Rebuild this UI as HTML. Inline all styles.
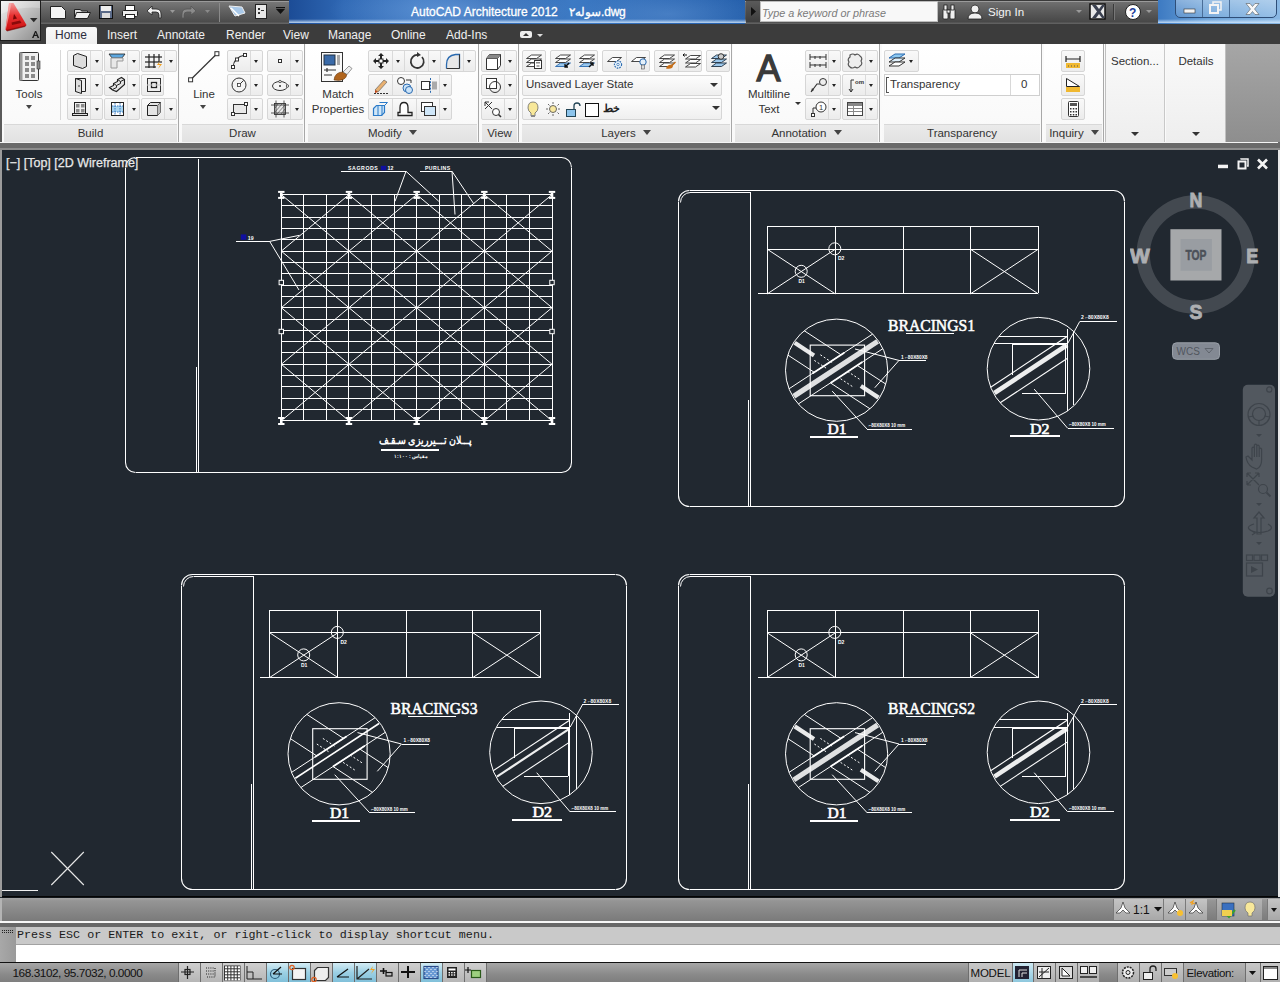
<!DOCTYPE html>
<html><head><meta charset="utf-8">
<style>
*{margin:0;padding:0;box-sizing:border-box}
html,body{width:1280px;height:982px;overflow:hidden;background:#212830;font-family:"Liberation Sans",sans-serif}
.a{position:absolute}
.tb{position:absolute;top:0;height:23.5px}
.qat{left:40px;width:249px;background:linear-gradient(#7c7c7c,#626262 45%,#4c4c4c 90%,#6a6a6a)}
.ttl{left:289px;width:457px;background:linear-gradient(90deg,#1c4c96,#2f68b4 12%,#3a74be 28%,#2e66b0 45%,#3d7ac4 62%,#2d68b4 82%,#2560ac);}
.srch{left:745px;width:413px;background:linear-gradient(#747474,#5c5c5c 45%,#484848 90%,#666)}
.win{left:1158px;width:122px;background:linear-gradient(90deg,#3d7ac2,#6ba2d8 40%,#8ab8e4)}
.tabs{position:absolute;left:0;top:23.5px;width:1280px;height:20.5px;background:#3c3c3c}
.tab{position:absolute;top:27.6px;font-size:12px;color:#f0f0f0;line-height:14px}
.rib{position:absolute;left:0;top:44px;width:1280px;height:98px;background:#fcfcfc}
.pnl{position:absolute;top:44px;height:98px;background:linear-gradient(#ffffff,#f8f8f8);border-right:1px solid #a8a8a8}
.pt{position:absolute;left:2px;right:2px;top:80px;height:18px;background:linear-gradient(#eaeaea,#e2e2e2);border-top:1px solid #d8d8d8;font-size:12.5px;color:#404040;text-align:center;line-height:17px}
.btn{position:absolute;height:22px;background:linear-gradient(#f9f9f9,#ececec);border:1px solid #d6d6d6;border-radius:2px}
.dd{position:absolute;width:0;height:0;border-left:4px solid transparent;border-right:4px solid transparent;border-top:4px solid #333}
.lbl{position:absolute;font-size:13px;color:#333;text-align:center;line-height:15px}
</style></head><body>

<!-- title bar -->
<div class="tb qat"></div>
<div class="tb ttl"></div>
<div class="tb srch"></div>
<div class="tb win"></div>
<div class="a" style="left:289px;top:0;width:457px;height:23px;background:radial-gradient(ellipse 120px 30px at 160px 10px,rgba(120,170,230,.55),transparent),radial-gradient(ellipse 90px 25px at 380px 14px,rgba(110,160,220,.4),transparent)"></div>
<div class="a" style="left:289px;top:19px;width:457px;height:4px;background:linear-gradient(rgba(200,225,255,0),rgba(215,235,255,.85))"></div><div class="a" style="left:1158px;top:19px;width:122px;height:4px;background:linear-gradient(rgba(200,225,255,0),rgba(215,235,255,.85))"></div><div class="a" style="left:40px;top:1px;width:249px;height:1px;background:#9a9a9a"></div><div class="a" style="left:745px;top:1px;width:413px;height:1px;background:#9a9a9a"></div><div class="a" style="left:40px;top:0;width:249px;height:1px;background:#3a3a3a"></div><div class="a" style="left:745px;top:0;width:413px;height:1px;background:#3a3a3a"></div>
<div class="a" style="left:411px;top:5px;font-size:12px;color:#fff;white-space:nowrap;line-height:14px;-webkit-text-stroke:0.3px #fff">AutoCAD Architecture 2012</div>
<div class="a" style="left:569px;top:5px;font-size:12px;color:#fff;white-space:nowrap;line-height:14px;-webkit-text-stroke:0.3px #fff;letter-spacing:-0.3px">سوله۲.dwg</div>
<!-- QAT icons -->
<svg class="a" style="left:44px;top:0" width="244" height="23" viewBox="44 0 244 23">
<path d="M50.5 6.5 h11 l4 4 v8 h-15z" fill="#f4f4f4" stroke="#222"/>
<path d="M74.5 9.5 h6 l1 1.5 h6 v7 h-13z" fill="#ddd" stroke="#222"/><path d="M76.5 12.5 h14 l-3 6 h-13z" fill="#f0f0f0" stroke="#222"/>
<rect x="99.5" y="5.5" width="13" height="13" fill="#5a6a88" stroke="#111"/><rect x="101" y="6" width="10" height="5" fill="#eee"/><rect x="102" y="13" width="8" height="5" fill="#ddd"/>
<rect x="122.5" y="10.5" width="15" height="6" rx="1" fill="#eee" stroke="#222"/><rect x="125.5" y="5.5" width="9" height="5" fill="#fff" stroke="#222"/><rect x="125.5" y="14.5" width="9" height="4" fill="#fff" stroke="#222"/>
<path d="M147 11 l5 -5 v3 h4 q5 0 5 5 v4 h-2 v-3 q0 -3 -3 -3 h-4 v3z" fill="#f2f2f2" stroke="#222" stroke-width=".8"/>
<path d="M170 10 h5 l-2.5 3z" fill="#9a9a9a"/>
<path d="M196 11 l-5 -5 v3 h-4 q-5 0 -5 5 v4 h2 v-3 q0 -3 3 -3 h4 v3z" fill="#8a8a8a" stroke="#555" stroke-width=".8"/>
<path d="M205 10 h5 l-2.5 3z" fill="#8a8a8a"/>
<line x1="219.5" y1="3" x2="219.5" y2="22" stroke="#8a8a8a"/>
<path d="M229 6 l6 10 l10 -3 l-3 -6z" fill="#a8c8e8" stroke="#eee" stroke-width="1"/><path d="M231 8 l8 8" stroke="#fff" stroke-width="1.5"/>
<rect x="255.5" y="4.5" width="11" height="14" fill="#e8e8e8" stroke="#222"/><rect x="258" y="8" width="2" height="2" fill="#333"/><rect x="258" y="12" width="2" height="2" fill="#333"/><rect x="261" y="10" width="3" height="1" fill="#333"/>
<path d="M276 9 h9 l-4.5 5z" fill="#111"/><rect x="276" y="7" width="9" height="1.2" fill="#111"/>
</svg>
<!-- search -->
<div class="a" style="left:746px;top:1px;width:14px;height:21px;background:linear-gradient(#5a5a5a,#3e3e3e)"></div>
<svg class="a" style="left:746px;top:1px" width="14" height="21"><path d="M5 6 l5 4.5 l-5 4.5z" fill="#111"/></svg>
<div class="a" style="left:760px;top:1px;width:178px;height:21px;background:#f8f8f8;border:1px solid #bdbdbd"></div>
<div class="a" style="left:762px;top:5.5px;font-size:10.8px;font-style:italic;color:#7a7a7a;line-height:14px;white-space:nowrap">Type a keyword or phrase</div>
<svg class="a" style="left:940px;top:2px" width="150" height="20">
<g fill="#f0f0f0" stroke="#222" stroke-width=".8"><rect x="3" y="7" width="5" height="10" rx="1"/><rect x="10" y="7" width="5" height="10" rx="1"/><rect x="4" y="3" width="3" height="5"/><rect x="11" y="3" width="3" height="5"/><rect x="7" y="8" width="3" height="3"/></g>
<circle cx="35" cy="7" r="4" fill="#f0f0f0" stroke="#222" stroke-width=".8"/><path d="M28 17 q0 -6 7 -6 q7 0 7 6z" fill="#f0f0f0" stroke="#222" stroke-width=".8"/>
<path d="M136 8 h6 l-3 3z" fill="#9a9a9a"/>
</svg>
<div class="a" style="left:988px;top:5px;font-size:11.6px;color:#f4f4f4;line-height:14px">Sign In</div>
<svg class="a" style="left:1088px;top:2px" width="70" height="20">
<rect x="2" y="2" width="15" height="15" fill="#e8e8e8" stroke="#111" stroke-width="1.5"/><path d="M4 3 l5 6.5 l-5 6.5 h4 l3 -4 l3 4 h3 l-4.5 -6.5 l4.5 -6.5 h-3 l-3 4 l-3 -4z" fill="#3a4050"/>
<line x1="25.5" y1="2" x2="25.5" y2="18" stroke="#3a3a3a"/><line x1="26.5" y1="2" x2="26.5" y2="18" stroke="#777"/>
<circle cx="45" cy="10" r="7.5" fill="#fff" stroke="#222"/><text x="41" y="14.5" font-family="Liberation Sans" font-weight="bold" font-size="12" fill="#1a3c9a">?</text>
<path d="M58 8 h6 l-3 3z" fill="#9a9a9a"/>
</svg>
<!-- window buttons -->
<div class="a" style="left:1175px;top:-2px;width:102px;height:20px;border:1px solid #2e4e78;border-radius:0 0 5px 5px;background:linear-gradient(rgba(255,255,255,.35),rgba(255,255,255,.1))"></div>
<div class="a" style="left:1202px;top:0;width:1px;height:17px;background:#4a6e98"></div>
<div class="a" style="left:1229px;top:0;width:1px;height:17px;background:#4a6e98"></div>
<svg class="a" style="left:1175px;top:0" width="102" height="18">
<rect x="9" y="9" width="11" height="4" fill="#f4f4f4" stroke="#333" stroke-width=".6"/>
<rect x="35" y="5" width="8" height="8" fill="none" stroke="#f4f4f4" stroke-width="2"/><path d="M38 4 v-2 h8 v8 h-2" fill="none" stroke="#f4f4f4" stroke-width="1.5"/>
<path d="M46 3 h4 l2.5 3 l2.5 -3 h4 l-4.5 5.5 l4.5 5.5 h-4 l-2.5 -3 l-2.5 3 h-4 l4.5 -5.5z" fill="#f8f8f8" stroke="#444" stroke-width=".5" transform="translate(25,0.5)"/>
</svg>
<!-- tabs -->
<div class="tabs"></div>
<div class="a" style="left:46px;top:27px;width:51px;height:17px;background:linear-gradient(#f8f8f8,#f0f0f0);border-radius:2px 2px 0 0"></div>
<div class="tab" style="left:55px;color:#2c2c3c">Home</div>
<div class="tab" style="left:107px">Insert</div>
<div class="tab" style="left:157px">Annotate</div>
<div class="tab" style="left:226px">Render</div>
<div class="tab" style="left:283px">View</div>
<div class="tab" style="left:328px">Manage</div>
<div class="tab" style="left:391px">Online</div>
<div class="tab" style="left:446px">Add-Ins</div>
<svg class="a" style="left:519px;top:29px" width="26" height="12"><rect x="1" y="2" width="12" height="7" rx="2" fill="#eee"/><path d="M4 7 l3-3 l3 3z" fill="#333"/><path d="M18 5 h6 l-3 3z" fill="#ddd"/></svg>
<!-- app button -->
<div class="a" style="left:0;top:0;width:41px;height:41px;background:#1e1e1e"></div>
<svg class="a" style="left:0;top:0" width="41" height="41" viewBox="0 0 41 41">
<defs><linearGradient id="abg" x1="0" y1="0" x2="1" y2="1"><stop offset="0" stop-color="#f2f2f2"/><stop offset=".45" stop-color="#c4c4c4"/><stop offset="1" stop-color="#8c8c8c"/></linearGradient>
<linearGradient id="ared" x1="0" y1="0" x2="0" y2="1"><stop offset="0" stop-color="#f29a9a"/><stop offset=".45" stop-color="#e83030"/><stop offset="1" stop-color="#c81010"/></linearGradient></defs>
<rect x="1" y="1" width="39" height="39" fill="url(#abg)"/>
<path d="M1 14 Q20 6 40 8 V1 H1z" fill="#fff" opacity=".25"/>
<path d="M9 3 L13.5 3 L26.5 25 L25 26.5 L7 31 L5.5 29.5 Z" fill="url(#ared)"/>
<path d="M9 3 L11.5 3 L8.5 18 L6 29 L5.5 29.5Z" fill="#f7b0b0" opacity=".7"/>
<path d="M14 14 L17 18.5 L13 19.5 Z" fill="#7a0808"/>
<path d="M11.5 22.5 L20 20.5 L21.5 23 L12 25 Z" fill="#8a0a0a"/>
<path d="M6 30 L25 25.5 L26.5 25 L25 27 L7 31.5Z" fill="#6a0606" opacity=".6"/>
<path d="M30 18 h7.5 l-3.75 4.2z" fill="#2a2a2a"/>
<path d="M32 38 l3 -7 h1.2 l3 7 h-1.6 l-.8 -2 h-2.5 l-.8 2z M34.8 34.8 h1.8 l-.9 -2.3z" fill="#1a1a1a"/>
</svg>

<div class="a" style="left:0;top:44px;width:1280px;height:106px;background:#6a6a6a"></div>
<div class="a" style="left:0;top:44px;width:1226px;height:98px;background:#fafafa"></div>
<div class="a" style="left:0;top:44px;width:2px;height:98px;background:#5a5a5a"></div>
<div class="a" style="left:0;top:142px;width:1278px;height:1px;background:#f4f4f4"></div>
<div class="a" style="left:0;top:148px;width:1280px;height:2px;background:#8c8c8c"></div>
<div class="a" style="left:1226px;top:44px;width:54px;height:98px;background:linear-gradient(#a6a6a6,#8e8e8e)"></div>
<div class="pnl" style="left:2px;width:177px"></div>
<div class="pt" style="left:4px;width:173px;top:124px;height:18px;position:absolute"></div>
<div class="a" style="left:30.5px;width:120px;top:126.8px;font-size:11.5px;color:#333;line-height:13.5px;text-align:center;white-space:nowrap">Build</div>
<div class="a" style="left:60px;top:50px;width:1px;height:70px;background:#d8d8d8"></div>
<svg class="a" style="left:17px;top:51px" width="26" height="32" viewBox="0 0 26 32"><rect x="2.5" y="1.5" width="19" height="28" rx="1" fill="#f0f0f0" stroke="#333"/><rect x="2.5" y="1.5" width="3" height="28" fill="#9a9a9a"/><rect x="8" y="5" width="4" height="4" fill="#8a8a8a"/><rect x="8" y="11" width="4" height="4" fill="#8a8a8a"/><rect x="8" y="17" width="4" height="4" fill="#8a8a8a"/><rect x="8" y="23" width="4" height="4" fill="#8a8a8a"/><rect x="14" y="5" width="4" height="4" fill="#8a8a8a"/><rect x="14" y="11" width="4" height="4" fill="#8a8a8a"/><rect x="14" y="17" width="4" height="4" fill="#8a8a8a"/><rect x="14" y="23" width="4" height="4" fill="#8a8a8a"/><rect x="20" y="10" width="3" height="8" fill="#888" stroke="#333" stroke-width=".6"/></svg>
<div class="a" style="left:-31px;width:120px;top:87.7px;font-size:11.5px;color:#333;line-height:13.5px;text-align:center;white-space:nowrap">Tools</div>
<div class="dd" style="left:25.5px;top:105.0px;border-left-width:3.5px;border-right-width:3.5px;border-top:4px solid #444"></div>
<div class="btn" style="left:67px;top:50px;width:36px;height:22px"></div>
<div class="a" style="left:90px;top:51px;width:1px;height:20px;background:#dadada"></div>
<div class="dd" style="left:94.5px;top:59.5px;border-left-width:2.7px;border-right-width:2.7px;border-top:3.2px solid #222"></div>
<div class="btn" style="left:104px;top:50px;width:36px;height:22px"></div>
<div class="a" style="left:127px;top:51px;width:1px;height:20px;background:#dadada"></div>
<div class="dd" style="left:131.5px;top:59.5px;border-left-width:2.7px;border-right-width:2.7px;border-top:3.2px solid #222"></div>
<div class="btn" style="left:67px;top:74px;width:36px;height:22px"></div>
<div class="a" style="left:90px;top:75px;width:1px;height:20px;background:#dadada"></div>
<div class="dd" style="left:94.5px;top:83.5px;border-left-width:2.7px;border-right-width:2.7px;border-top:3.2px solid #222"></div>
<div class="btn" style="left:104px;top:74px;width:36px;height:22px"></div>
<div class="a" style="left:127px;top:75px;width:1px;height:20px;background:#dadada"></div>
<div class="dd" style="left:131.5px;top:83.5px;border-left-width:2.7px;border-right-width:2.7px;border-top:3.2px solid #222"></div>
<div class="btn" style="left:67px;top:98px;width:36px;height:22px"></div>
<div class="a" style="left:90px;top:99px;width:1px;height:20px;background:#dadada"></div>
<div class="dd" style="left:94.5px;top:107.5px;border-left-width:2.7px;border-right-width:2.7px;border-top:3.2px solid #222"></div>
<div class="btn" style="left:104px;top:98px;width:36px;height:22px"></div>
<div class="a" style="left:127px;top:99px;width:1px;height:20px;background:#dadada"></div>
<div class="dd" style="left:131.5px;top:107.5px;border-left-width:2.7px;border-right-width:2.7px;border-top:3.2px solid #222"></div>
<div class="btn" style="left:141px;top:50px;width:36px;height:22px"></div>
<div class="a" style="left:164px;top:51px;width:1px;height:20px;background:#dadada"></div>
<div class="dd" style="left:168.5px;top:59.5px;border-left-width:2.7px;border-right-width:2.7px;border-top:3.2px solid #222"></div>
<div class="btn" style="left:141px;top:74px;width:23px;height:22px"></div>
<div class="btn" style="left:141px;top:98px;width:36px;height:22px"></div>
<div class="a" style="left:164px;top:99px;width:1px;height:20px;background:#dadada"></div>
<div class="dd" style="left:168.5px;top:107.5px;border-left-width:2.7px;border-right-width:2.7px;border-top:3.2px solid #222"></div>
<svg class="a" style="left:70px;top:52px" width="20" height="18" viewBox="0 0 20 18"><path d="M3.5 3.5 l4 -2 l9 3 v10 l-4 2 l-9 -3z" fill="#dcdcdc" stroke="#222"/><path d="M7.5 1.5 v0" stroke="#222"/></svg>
<svg class="a" style="left:107px;top:52px" width="20" height="18" viewBox="0 0 20 18"><path d="M2 2 h16 l-3 4 h-10z" fill="#5ea8e0" stroke="#222" stroke-width=".8"/><path d="M4 6 h12 v3 h-6 v7 h-6z" fill="#e8e8e8" stroke="#999"/></svg>
<svg class="a" style="left:144px;top:52px" width="20" height="18" viewBox="0 0 20 18"><g stroke="#222" stroke-width="1.2"><line x1="5" y1="2" x2="5" y2="16"/><line x1="10" y1="2" x2="10" y2="16"/><line x1="15" y1="2" x2="15" y2="10"/><line x1="1" y1="5" x2="18" y2="5"/><line x1="1" y1="10" x2="18" y2="10"/><line x1="1" y1="15" x2="12" y2="15"/></g><path d="M16 9 l-3 4 h3 l-2 4 l4 -5 h-3z" fill="#f0a020"/></svg>
<svg class="a" style="left:70px;top:76px" width="20" height="18" viewBox="0 0 20 18"><path d="M5.5 2.5 h10 v13 h-10z" fill="#eee" stroke="#222"/><path d="M5.5 2.5 l6 2 v13 l-6 -2z" fill="#ddd" stroke="#222"/><circle cx="9" cy="10" r=".8" fill="#222"/></svg>
<svg class="a" style="left:107px;top:76px" width="20" height="18" viewBox="0 0 20 18"><path d="M2.5 11.5 l4 -2 v-2 l4 -2 v-2 l4 -2 l3 2 v5 l-8 7 l-4 -1.5 z" fill="#e4e4e4" stroke="#222" stroke-width="1.1"/><path d="M2.5 11.5 l3 2 l4 -2 v-2 l-3 -2 M9.5 9.5 l4 -2 v-2 l-3 -2 M13.5 5.5 l4 -2" fill="none" stroke="#222" stroke-width="1"/></svg>
<svg class="a" style="left:144px;top:76px" width="20" height="18" viewBox="0 0 20 18"><rect x="3.5" y="2.5" width="13" height="13" fill="#eee" stroke="#333"/><rect x="7.5" y="6.5" width="5" height="5" fill="#fff" stroke="#222" stroke-width="1.3"/><line x1="3" y1="9" x2="17" y2="9" stroke="#ccc"/></svg>
<svg class="a" style="left:70px;top:100px" width="20" height="18" viewBox="0 0 20 18"><rect x="4.5" y="2.5" width="11" height="11" fill="#eee" stroke="#222"/><rect x="6" y="4" width="3.5" height="3.5" fill="#8a8a8a"/><rect x="11" y="4" width="3.5" height="3.5" fill="#8a8a8a"/><rect x="6" y="9" width="3.5" height="3.5" fill="#8a8a8a"/><rect x="11" y="9" width="3.5" height="3.5" fill="#8a8a8a"/><rect x="2.5" y="13.5" width="15" height="2" fill="#ddd" stroke="#222"/></svg>
<svg class="a" style="left:107px;top:100px" width="20" height="18" viewBox="0 0 20 18"><rect x="4.5" y="2.5" width="12" height="13" fill="#fff" stroke="#222"/><rect x="5" y="6" width="11" height="6" fill="#a8d4f0"/><path d="M5 6 h11 M5 12 h11 M8 3 v12 M13 3 v12" stroke="#3a7ac0" stroke-dasharray="1.5 1"/></svg>
<svg class="a" style="left:144px;top:100px" width="20" height="18" viewBox="0 0 20 18"><path d="M3.5 5.5 l3 -3 h10 v10 l-3 3 h-10z" fill="#e4e4e4" stroke="#222"/><path d="M3.5 5.5 h10 v10 M13.5 5.5 l3 -3" fill="none" stroke="#222"/><path d="M13.5 5.5 l3-3 v10 l-3 3z" fill="#bbb"/></svg>
<div class="pnl" style="left:180px;width:125px"></div>
<div class="pt" style="left:182px;width:121px;top:124px;height:18px;position:absolute"></div>
<div class="a" style="left:182.5px;width:120px;top:126.8px;font-size:11.5px;color:#333;line-height:13.5px;text-align:center;white-space:nowrap">Draw</div>
<svg class="a" style="left:186px;top:51px" width="34" height="32" viewBox="0 0 34 32"><line x1="4.6" y1="28.8" x2="30.9" y2="2.7" stroke="#333" stroke-width="1.2"/><rect x="2.6" y="26.8" width="4" height="4" fill="#fff" stroke="#333"/><rect x="28.9" y="0.7" width="4" height="4" fill="#fff" stroke="#333"/></svg>
<div class="a" style="left:144px;width:120px;top:87.9px;font-size:11.5px;color:#333;line-height:13.5px;text-align:center;white-space:nowrap">Line</div>
<div class="dd" style="left:199.5px;top:105.0px;border-left-width:3.5px;border-right-width:3.5px;border-top:4px solid #444"></div>
<div class="btn" style="left:227px;top:50px;width:36px;height:22px"></div>
<div class="a" style="left:250px;top:51px;width:1px;height:20px;background:#dadada"></div>
<div class="dd" style="left:253.5px;top:59.5px;border-left-width:2.7px;border-right-width:2.7px;border-top:3.2px solid #222"></div>
<div class="btn" style="left:267px;top:50px;width:36px;height:22px"></div>
<div class="a" style="left:290px;top:51px;width:1px;height:20px;background:#dadada"></div>
<div class="dd" style="left:294.5px;top:59.5px;border-left-width:2.7px;border-right-width:2.7px;border-top:3.2px solid #222"></div>
<div class="btn" style="left:227px;top:74px;width:36px;height:22px"></div>
<div class="a" style="left:250px;top:75px;width:1px;height:20px;background:#dadada"></div>
<div class="dd" style="left:253.5px;top:83.5px;border-left-width:2.7px;border-right-width:2.7px;border-top:3.2px solid #222"></div>
<div class="btn" style="left:267px;top:74px;width:36px;height:22px"></div>
<div class="a" style="left:290px;top:75px;width:1px;height:20px;background:#dadada"></div>
<div class="dd" style="left:294.5px;top:83.5px;border-left-width:2.7px;border-right-width:2.7px;border-top:3.2px solid #222"></div>
<div class="btn" style="left:227px;top:98px;width:36px;height:22px"></div>
<div class="a" style="left:250px;top:99px;width:1px;height:20px;background:#dadada"></div>
<div class="dd" style="left:253.5px;top:107.5px;border-left-width:2.7px;border-right-width:2.7px;border-top:3.2px solid #222"></div>
<div class="btn" style="left:267px;top:98px;width:36px;height:22px"></div>
<div class="a" style="left:290px;top:99px;width:1px;height:20px;background:#dadada"></div>
<div class="dd" style="left:294.5px;top:107.5px;border-left-width:2.7px;border-right-width:2.7px;border-top:3.2px solid #222"></div>
<svg class="a" style="left:229px;top:52px" width="20" height="18" viewBox="0 0 20 18"><path d="M4 15 Q5 5 16 3" fill="none" stroke="#333" stroke-width="1.1"/><rect x="2.5" y="13.5" width="3" height="3" fill="#fff" stroke="#333"/><rect x="6.5" y="6" width="3" height="3" fill="#fff" stroke="#333"/><rect x="14.5" y="1.5" width="3" height="3" fill="#fff" stroke="#333"/></svg>
<svg class="a" style="left:229px;top:76px" width="20" height="18" viewBox="0 0 20 18"><circle cx="10" cy="9" r="7" fill="#f4f4f4" stroke="#333"/><line x1="10" y1="9" x2="14.5" y2="4.5" stroke="#333"/><rect x="8.5" y="7.5" width="3" height="3" fill="#fff" stroke="#333" stroke-width=".8"/></svg>
<svg class="a" style="left:229px;top:100px" width="20" height="18" viewBox="0 0 20 18"><rect x="4.5" y="4.5" width="13" height="9" fill="#e8e8e8" stroke="#333"/><rect x="2.5" y="12.5" width="3" height="3" fill="#fff" stroke="#333"/><rect x="15.5" y="2.5" width="3" height="3" fill="#fff" stroke="#333"/></svg>
<svg class="a" style="left:270px;top:52px" width="20" height="18" viewBox="0 0 20 18"><rect x="8.5" y="7.5" width="3" height="3" fill="#fff" stroke="#333"/></svg>
<svg class="a" style="left:270px;top:76px" width="20" height="18" viewBox="0 0 20 18"><ellipse cx="10" cy="10" rx="7.5" ry="4.5" fill="#f4f4f4" stroke="#333"/><circle cx="10" cy="5.5" r="1.2" fill="#fff" stroke="#333" stroke-width=".8"/><circle cx="17.5" cy="10" r="1.2" fill="#fff" stroke="#333" stroke-width=".8"/><path d="M9 10 h2 M10 9 v2" stroke="#333"/></svg>
<svg class="a" style="left:270px;top:100px" width="20" height="18" viewBox="0 0 20 18"><rect x="4.5" y="3.5" width="11" height="11" fill="#e8e8e8" stroke="#333" stroke-width=".9"/><path d="M5 8 l3 -4 M5 12 l7 -8 M7 14 l8 -9 M11 14 l4 -5" stroke="#777" stroke-width=".9"/><path d="M1 5 h18 M1 13 h18 M6 0.5 v17 M14 0.5 v17" stroke="#333" stroke-width=".8"/></svg>
<div class="pnl" style="left:306px;width:173px"></div>
<div class="pt" style="left:308px;width:169px;top:124px;height:18px;position:absolute"></div>
<div class="a" style="left:332.5px;width:120px;top:126.8px;font-size:11.5px;color:#333;line-height:13.5px;text-align:center;white-space:nowrap">Modify <span style="display:inline-block;width:0;height:0;border-left:4px solid transparent;border-right:4px solid transparent;border-top:5px solid #444;vertical-align:2px;margin-left:4px"></span></div>
<svg class="a" style="left:319px;top:51px" width="36" height="34" viewBox="0 0 36 34"><rect x="2.5" y="1.5" width="21" height="29" fill="#fafafa" stroke="#333"/><rect x="5" y="4" width="11" height="10" fill="#3a6aa8" stroke="#234"/><rect x="18" y="4" width="3" height="10" fill="#aaa"/><path d="M5 19 h12 M8 17 v4 M5 24 h8" stroke="#333" stroke-width="1.2"/><path d="M15 29 q1 -8 9 -8 l4 2 q-1 8 -13 6z" fill="#b0641c" stroke="#6a3a10" stroke-width=".6"/><path d="M24 21 l6 -6 l3 2.5 l-5 6z" fill="#eee" stroke="#555" stroke-width=".6"/></svg>
<div class="a" style="left:278px;width:120px;top:87.9px;font-size:11.5px;color:#333;line-height:13.5px;text-align:center;white-space:nowrap">Match</div>
<div class="a" style="left:278px;width:120px;top:102.8px;font-size:11.5px;color:#333;line-height:13.5px;text-align:center;white-space:nowrap">Properties</div>
<div class="btn" style="left:368px;top:50px;width:108px;height:22px"></div>
<div class="a" style="left:392px;top:51px;width:1px;height:20px;background:#dadada"></div>
<div class="a" style="left:404px;top:51px;width:1px;height:20px;background:#dadada"></div>
<div class="a" style="left:428px;top:51px;width:1px;height:20px;background:#dadada"></div>
<div class="a" style="left:440px;top:51px;width:1px;height:20px;background:#dadada"></div>
<div class="a" style="left:463px;top:51px;width:1px;height:20px;background:#dadada"></div>
<div class="dd" style="left:395.5px;top:59.5px;border-left-width:2.7px;border-right-width:2.7px;border-top:3.2px solid #222"></div>
<div class="dd" style="left:431.5px;top:59.5px;border-left-width:2.7px;border-right-width:2.7px;border-top:3.2px solid #222"></div>
<div class="dd" style="left:466.5px;top:59.5px;border-left-width:2.7px;border-right-width:2.7px;border-top:3.2px solid #222"></div>
<div class="btn" style="left:368px;top:74px;width:84px;height:22px"></div>
<div class="a" style="left:392px;top:75px;width:1px;height:20px;background:#dadada"></div>
<div class="a" style="left:416px;top:75px;width:1px;height:20px;background:#dadada"></div>
<div class="a" style="left:439px;top:75px;width:1px;height:20px;background:#dadada"></div>
<div class="dd" style="left:442.5px;top:83.5px;border-left-width:2.7px;border-right-width:2.7px;border-top:3.2px solid #222"></div>
<div class="btn" style="left:368px;top:98px;width:84px;height:22px"></div>
<div class="a" style="left:392px;top:99px;width:1px;height:20px;background:#dadada"></div>
<div class="a" style="left:416px;top:99px;width:1px;height:20px;background:#dadada"></div>
<div class="a" style="left:439px;top:99px;width:1px;height:20px;background:#dadada"></div>
<div class="dd" style="left:442.5px;top:107.5px;border-left-width:2.7px;border-right-width:2.7px;border-top:3.2px solid #222"></div>
<svg class="a" style="left:371px;top:52px" width="20" height="18" viewBox="0 0 20 18"><path d="M10 1 l3 3 h-2 v4 h4 v-2 l3 3 l-3 3 v-2 h-4 v4 h2 l-3 3 l-3 -3 h2 v-4 h-4 v2 l-3 -3 l3 -3 v2 h4 v-4 h-2z" fill="#222"/><rect x="8" y="7" width="4" height="4" fill="#fff" stroke="#222"/></svg>
<svg class="a" style="left:407px;top:52px" width="20" height="18" viewBox="0 0 20 18"><path d="M15 5 a6.5 6.5 0 1 1 -4 -2" fill="none" stroke="#333" stroke-width="1.8"/><path d="M10 0 l4 3 l-4 2z" fill="#333"/></svg>
<svg class="a" style="left:443px;top:52px" width="20" height="18" viewBox="0 0 20 18"><path d="M3.5 16.5 v-4 q0 -9 9 -10 h4 v14z" fill="#e8e8e8" stroke="none"/><path d="M3.5 16.5 v-4 q0 -9 9 -10 h4 v14" fill="none" stroke="#2a6ab0" stroke-width="1.3"/><path d="M16.5 2.5 v14 h-13" fill="none" stroke="#333"/></svg>
<svg class="a" style="left:371px;top:76px" width="20" height="18" viewBox="0 0 20 18"><path d="M4 14 l9 -10 l3 2 l-9 10z" fill="#e8b070" stroke="#555" stroke-width=".6"/><path d="M4 14 l3 2 l-3 1z" fill="#c04010"/><path d="M3 17.5 h14" stroke="#333" stroke-dasharray="2 1"/></svg>
<svg class="a" style="left:395px;top:76px" width="20" height="18" viewBox="0 0 20 18"><circle cx="6" cy="5" r="3.5" fill="#fff" stroke="#333"/><circle cx="12" cy="12" r="4" fill="#cce4f8" stroke="#2a6ab0"/><circle cx="14" cy="14" r="3.5" fill="#cce4f8" stroke="#2a6ab0"/><path d="M11 4 h5 v3" fill="none" stroke="#333"/></svg>
<svg class="a" style="left:419px;top:76px" width="20" height="18" viewBox="0 0 20 18"><rect x="2.5" y="5.5" width="8" height="8" fill="#fff" stroke="#333"/><rect x="13" y="5.5" width="5" height="8" fill="#aaa"/><line x1="11.5" y1="2" x2="11.5" y2="17" stroke="#2a6ab0" stroke-dasharray="2 1.2"/></svg>
<svg class="a" style="left:371px;top:100px" width="20" height="18" viewBox="0 0 20 18"><path d="M2.5 8.5 l3 -3 h8 v7 l-3 3 h-8z" fill="#cfe6f8" stroke="#2a7ac8" stroke-width="1.2"/><path d="M7 5.5 v10 M11 5.5 v10 M13.5 5.5 l3 -3 h-8" fill="none" stroke="#2a7ac8"/></svg>
<svg class="a" style="left:395px;top:100px" width="20" height="18" viewBox="0 0 20 18"><path d="M3 15.5 h14 v-3 h-4 v-5 q0 -5 -4 -5 q-4 0 -4 5 v5 h-2z" fill="#fff" stroke="#222" stroke-width="1.3"/></svg>
<svg class="a" style="left:419px;top:100px" width="20" height="18" viewBox="0 0 20 18"><rect x="2.5" y="2.5" width="11" height="9" fill="#fff" stroke="#333"/><rect x="5.5" y="6.5" width="11" height="9" fill="#cfe6f8" stroke="#333"/></svg>
<div class="pnl" style="left:480px;width:39px"></div>
<div class="pt" style="left:482px;width:35px;top:124px;height:18px;position:absolute"></div>
<div class="a" style="left:439.5px;width:120px;top:126.8px;font-size:11.5px;color:#333;line-height:13.5px;text-align:center;white-space:nowrap">View</div>
<div class="btn" style="left:481px;top:50px;width:36px;height:22px"></div>
<div class="a" style="left:504px;top:51px;width:1px;height:20px;background:#dadada"></div>
<div class="dd" style="left:507.5px;top:59.5px;border-left-width:2.7px;border-right-width:2.7px;border-top:3.2px solid #222"></div>
<div class="btn" style="left:481px;top:74px;width:36px;height:22px"></div>
<div class="a" style="left:504px;top:75px;width:1px;height:20px;background:#dadada"></div>
<div class="dd" style="left:507.5px;top:83.5px;border-left-width:2.7px;border-right-width:2.7px;border-top:3.2px solid #222"></div>
<div class="btn" style="left:481px;top:98px;width:36px;height:22px"></div>
<div class="a" style="left:504px;top:99px;width:1px;height:20px;background:#dadada"></div>
<div class="dd" style="left:507.5px;top:107.5px;border-left-width:2.7px;border-right-width:2.7px;border-top:3.2px solid #222"></div>
<svg class="a" style="left:483px;top:52px" width="20" height="18" viewBox="0 0 20 18"><path d="M3.5 6.5 l3 -4 h11 v11 l-3 4 h-11z" fill="#fff" stroke="#333"/><path d="M3.5 6.5 h11 v11 M14.5 6.5 l3 -4" fill="none" stroke="#333"/><path d="M6.5 2.5 h11 l-3 4 h-11z" fill="#888"/></svg>
<svg class="a" style="left:483px;top:76px" width="20" height="18" viewBox="0 0 20 18"><rect x="3.5" y="2.5" width="10" height="10" fill="#fff" stroke="#333"/><circle cx="12" cy="11" r="5.5" fill="none" stroke="#333"/></svg>
<svg class="a" style="left:483px;top:100px" width="20" height="18" viewBox="0 0 20 18"><path d="M2 2 l7 7 M2 2 v4 M2 2 h4 M9 2 l-7 7" stroke="#333" fill="none"/><circle cx="13" cy="12" r="3.5" fill="#fff" stroke="#333"/><line x1="15.5" y1="14.5" x2="18" y2="17" stroke="#333" stroke-width="1.6"/></svg>
<div class="pnl" style="left:520px;width:212px"></div>
<div class="pt" style="left:522px;width:208px;top:124px;height:18px;position:absolute"></div>
<div class="a" style="left:566.0px;width:120px;top:126.8px;font-size:11.5px;color:#333;line-height:13.5px;text-align:center;white-space:nowrap">Layers <span style="display:inline-block;width:0;height:0;border-left:4px solid transparent;border-right:4px solid transparent;border-top:5px solid #444;vertical-align:2px;margin-left:4px"></span></div>
<div class="btn" style="left:522px;top:50px;width:24px;height:22px"></div>
<div class="btn" style="left:550px;top:50px;width:48px;height:22px"></div>
<div class="a" style="left:574px;top:51px;width:1px;height:20px;background:#dadada"></div>
<div class="btn" style="left:602px;top:50px;width:48px;height:22px"></div>
<div class="a" style="left:626px;top:51px;width:1px;height:20px;background:#dadada"></div>
<div class="btn" style="left:654px;top:50px;width:48px;height:22px"></div>
<div class="a" style="left:678px;top:51px;width:1px;height:20px;background:#dadada"></div>
<div class="btn" style="left:706px;top:50px;width:24px;height:22px"></div>
<svg class="a" style="left:524px;top:52px" width="20" height="18" viewBox="0 0 20 18"><path d="M2.5 14.5 l5 -3.5 h10 l-5 3.5z" fill="#fff" stroke="#333" stroke-width=".9" stroke-linejoin="round"/><path d="M2.5 10.5 l5 -3.5 h10 l-5 3.5z" fill="#fff" stroke="#333" stroke-width=".9" stroke-linejoin="round"/><path d="M2.5 6.5 l5 -3.5 h10 l-5 3.5z" fill="#fff" stroke="#333" stroke-width=".9" stroke-linejoin="round"/><rect x="10.5" y="8.5" width="7" height="8" fill="#fff" stroke="#333"/><rect x="12" y="10" width="4" height="1.5" fill="#888"/><rect x="12.5" y="13" width="3" height="2" fill="#aaa"/></svg>
<svg class="a" style="left:553px;top:52px" width="20" height="18" viewBox="0 0 20 18"><path d="M2.5 14.5 l5 -3.5 h10 l-5 3.5z" fill="#9cc8ec" stroke="#2a6ab0" stroke-width=".9" stroke-linejoin="round"/><path d="M2.5 10.5 l5 -3.5 h10 l-5 3.5z" fill="#fff" stroke="#333" stroke-width=".9" stroke-linejoin="round"/><path d="M2.5 6.5 l5 -3.5 h10 l-5 3.5z" fill="#fff" stroke="#333" stroke-width=".9" stroke-linejoin="round"/><path d="M16 11 l-4 4 M12 12 v3 h3" stroke="#111" fill="none" stroke-width="1.3"/></svg>
<svg class="a" style="left:577px;top:52px" width="20" height="18" viewBox="0 0 20 18"><path d="M2.5 14.5 l5 -3.5 h10 l-5 3.5z" fill="#9cc8ec" stroke="#2a6ab0" stroke-width=".9" stroke-linejoin="round"/><path d="M2.5 10.5 l5 -3.5 h10 l-5 3.5z" fill="#fff" stroke="#333" stroke-width=".9" stroke-linejoin="round"/><path d="M2.5 6.5 l5 -3.5 h10 l-5 3.5z" fill="#fff" stroke="#333" stroke-width=".9" stroke-linejoin="round"/><path d="M12 15 l4 -4 M13 11 h3 v3" stroke="#111" fill="none" stroke-width="1.3"/></svg>
<svg class="a" style="left:605px;top:52px" width="20" height="18" viewBox="0 0 20 18"><path d="M2.5 9.5 l5 -4 h9 l-5 4z" fill="#fff" stroke="#333" stroke-width=".9"/><circle cx="13" cy="12.5" r="3.6" fill="#e4f0fa" stroke="#2a6ab0" stroke-width="1.1" stroke-dasharray="1.6 1"/><circle cx="13" cy="12.5" r="1.2" fill="#fff" stroke="#2a6ab0" stroke-width=".7"/></svg>
<svg class="a" style="left:629px;top:52px" width="20" height="18" viewBox="0 0 20 18"><path d="M2.5 9.5 l5 -4 h9 l-5 4z" fill="#fff" stroke="#333" stroke-width=".9"/><circle cx="14" cy="10" r="3.2" fill="#e4f0fa" stroke="#2a6ab0"/><rect x="12.5" y="13" width="3" height="4" fill="#ddd" stroke="#555" stroke-width=".6"/></svg>
<svg class="a" style="left:657px;top:52px" width="20" height="18" viewBox="0 0 20 18"><path d="M2.5 14.5 l5 -3.5 h10 l-5 3.5z" fill="#fff" stroke="#333" stroke-width=".9" stroke-linejoin="round"/><path d="M2.5 10.5 l5 -3.5 h10 l-5 3.5z" fill="#fff" stroke="#333" stroke-width=".9" stroke-linejoin="round"/><path d="M2.5 6.5 l5 -3.5 h10 l-5 3.5z" fill="#fff" stroke="#333" stroke-width=".9" stroke-linejoin="round"/><path d="M9 16.5 q1 -4 6 -4 l3 -3 l1 1 l-3 3 q0 4 -7 3z" fill="#c8701a"/></svg>
<svg class="a" style="left:681px;top:52px" width="20" height="18" viewBox="0 0 20 18"><g transform="translate(2,0.5)"><path d="M2.5 14.5 l5 -3.5 h10 l-5 3.5z" fill="#fff" stroke="#333" stroke-width=".9" stroke-linejoin="round"/><path d="M2.5 10.5 l5 -3.5 h10 l-5 3.5z" fill="#fff" stroke="#333" stroke-width=".9" stroke-linejoin="round"/><path d="M2.5 6.5 l5 -3.5 h10 l-5 3.5z" fill="#fff" stroke="#333" stroke-width=".9" stroke-linejoin="round"/></g><path d="M2 3 h4 M3.5 1.5 l-1.5 1.5 l1.5 1.5" stroke="#111" fill="none"/></svg>
<svg class="a" style="left:709px;top:52px" width="20" height="18" viewBox="0 0 20 18"><path d="M2.5 14.5 l5 -3.5 h10 l-5 3.5z" fill="#9cc8ec" stroke="#234" stroke-width=".9" stroke-linejoin="round"/><path d="M2.5 10.5 l5 -3.5 h10 l-5 3.5z" fill="#9cc8ec" stroke="#234" stroke-width=".9" stroke-linejoin="round"/><path d="M2.5 6.5 l5 -3.5 h10 l-5 3.5z" fill="#9cc8ec" stroke="#234" stroke-width=".9" stroke-linejoin="round"/><circle cx="12" cy="4.5" r="2.8" fill="#ccc" stroke="#333"/></svg>
<div class="btn" style="left:522px;top:75px;width:200px;height:21px;background:linear-gradient(#fdfdfd,#efefef)"></div>
<div class="a" style="left:526px;top:78.2px;font-size:11.5px;color:#333;line-height:13.5px;white-space:nowrap;">Unsaved Layer State</div>
<div class="dd" style="left:710px;top:83.0px;border-left-width:4px;border-right-width:4px;border-top:4px solid #333"></div>
<div class="btn" style="left:522px;top:98px;width:200px;height:22px;background:linear-gradient(#fdfdfd,#efefef)"></div>
<svg class="a" style="left:527px;top:100px" width="80" height="18" viewBox="0 0 80 18"><path d="M6 2 q-5 0 -5 6 q0 3 3 5 v3 h4 v-3 q3 -2 3 -5 q0 -6 -5 -6z" fill="#f8e89a" stroke="#555" stroke-width=".7"/><rect x="4" y="15" width="4" height="2" fill="#888"/><circle cx="26" cy="9" r="3.5" fill="#f8e8a0" stroke="#444" stroke-width=".8"/><path d="M26 2 v2 M26 14 v2 M19 9 h2 M31 9 h2 M21 4 l1.5 1.5 M30.5 12.5 l1.5 1.5 M21 14 l1.5 -1.5 M30.5 5.5 l1.5 -1.5" stroke="#444" stroke-width=".8"/><rect x="39.5" y="9.5" width="9" height="7" fill="#8cc4ec" stroke="#245"/><path d="M47 9 v-3 q0 -3 3 -3 q3 0 3 3" fill="none" stroke="#245" stroke-width="1.3"/><rect x="58.5" y="3.5" width="13" height="13" fill="#fff" stroke="#111"/></svg>
<div class="a" style="left:603px;top:101.6px;font-size:10.5px;color:#222;line-height:12.5px;white-space:nowrap;font-weight:bold">خط</div>
<div class="dd" style="left:712px;top:106.0px;border-left-width:4px;border-right-width:4px;border-top:4px solid #333"></div>
<div class="pnl" style="left:733px;width:147px"></div>
<div class="pt" style="left:735px;width:143px;top:124px;height:18px;position:absolute"></div>
<div class="a" style="left:746.5px;width:120px;top:126.8px;font-size:11.5px;color:#333;line-height:13.5px;text-align:center;white-space:nowrap">Annotation <span style="display:inline-block;width:0;height:0;border-left:4px solid transparent;border-right:4px solid transparent;border-top:5px solid #444;vertical-align:2px;margin-left:4px"></span></div>
<div class="a" style="left:743.5px;top:50.2px;width:50px;font-size:36px;line-height:38px;color:#3a3a3a;text-align:center;-webkit-text-stroke:1.3px #3a3a3a">A</div>
<div class="a" style="left:709px;width:120px;top:88.2px;font-size:11.5px;color:#333;line-height:13.5px;text-align:center;white-space:nowrap">Multiline</div>
<div class="a" style="left:709px;width:120px;top:103.0px;font-size:11.5px;color:#333;line-height:13.5px;text-align:center;white-space:nowrap">Text</div>
<div class="dd" style="left:795px;top:102.2px;border-left-width:3px;border-right-width:3px;border-top:3.5px solid #333"></div>
<div class="btn" style="left:805px;top:50px;width:36px;height:22px"></div>
<div class="a" style="left:828px;top:51px;width:1px;height:20px;background:#dadada"></div>
<div class="dd" style="left:831.5px;top:59.5px;border-left-width:2.7px;border-right-width:2.7px;border-top:3.2px solid #222"></div>
<div class="btn" style="left:842px;top:50px;width:36px;height:22px"></div>
<div class="a" style="left:865px;top:51px;width:1px;height:20px;background:#dadada"></div>
<div class="dd" style="left:868.5px;top:59.5px;border-left-width:2.7px;border-right-width:2.7px;border-top:3.2px solid #222"></div>
<div class="btn" style="left:805px;top:74px;width:36px;height:22px"></div>
<div class="a" style="left:828px;top:75px;width:1px;height:20px;background:#dadada"></div>
<div class="dd" style="left:831.5px;top:83.5px;border-left-width:2.7px;border-right-width:2.7px;border-top:3.2px solid #222"></div>
<div class="btn" style="left:842px;top:74px;width:36px;height:22px"></div>
<div class="a" style="left:865px;top:75px;width:1px;height:20px;background:#dadada"></div>
<div class="dd" style="left:868.5px;top:83.5px;border-left-width:2.7px;border-right-width:2.7px;border-top:3.2px solid #222"></div>
<div class="btn" style="left:805px;top:98px;width:36px;height:22px"></div>
<div class="a" style="left:828px;top:99px;width:1px;height:20px;background:#dadada"></div>
<div class="dd" style="left:831.5px;top:107.5px;border-left-width:2.7px;border-right-width:2.7px;border-top:3.2px solid #222"></div>
<div class="btn" style="left:842px;top:98px;width:36px;height:22px"></div>
<div class="a" style="left:865px;top:99px;width:1px;height:20px;background:#dadada"></div>
<div class="dd" style="left:868.5px;top:107.5px;border-left-width:2.7px;border-right-width:2.7px;border-top:3.2px solid #222"></div>
<svg class="a" style="left:808px;top:52px" width="20" height="18" viewBox="0 0 20 18"><path d="M2 5 h16 M2 13 h16" stroke="#333" stroke-width="1.2"/><path d="M2 2 v6 M18 2 v6 M2 10 v6 M18 10 v6 M7 4 v3 M12 4 v3 M7 12 v3 M12 12 v3" stroke="#333"/></svg>
<svg class="a" style="left:845px;top:52px" width="20" height="18" viewBox="0 0 20 18"><path d="M5 3 q3 -2 5 0 q3 -2 5 1 q3 2 1 5 q2 3 -1 5 q-2 3 -5 1 q-3 2 -5 0 q-3 -2 -1 -5 q-2 -3 1 -5z" fill="#eee" stroke="#555" stroke-width="1.2"/></svg>
<svg class="a" style="left:808px;top:76px" width="20" height="18" viewBox="0 0 20 18"><path d="M3 16 l6 -8 h3" fill="none" stroke="#333" stroke-width="1.2"/><path d="M3 16 l1 -4 l2 2z" fill="#333"/><circle cx="15" cy="6" r="3.5" fill="#eee" stroke="#333"/></svg>
<svg class="a" style="left:845px;top:76px" width="20" height="18" viewBox="0 0 20 18"><path d="M6 4 v12 M4 13 l2 3 l2 -3 M6 4 h3" fill="none" stroke="#333"/><text x="10" y="8" font-size="6" font-family="Liberation Sans" font-weight="bold" fill="#333">om</text></svg>
<svg class="a" style="left:808px;top:100px" width="20" height="18" viewBox="0 0 20 18"><path d="M5 14 v-6 h4" fill="none" stroke="#333"/><rect x="3.5" y="13.5" width="3" height="3" fill="#fff" stroke="#333"/><circle cx="13" cy="7" r="5" fill="#fff" stroke="#333"/><text x="11" y="10" font-size="7.5" font-family="Liberation Sans" fill="#333">1</text></svg>
<svg class="a" style="left:845px;top:100px" width="20" height="18" viewBox="0 0 20 18"><rect x="2.5" y="2.5" width="15" height="13" fill="#fff" stroke="#444"/><rect x="3" y="3" width="14" height="3" fill="#888"/><path d="M3 8.5 h14 M3 11.5 h14 M8.5 6 v9" stroke="#888"/></svg>
<div class="pnl" style="left:882px;width:160px"></div>
<div class="pt" style="left:884px;width:156px;top:124px;height:18px;position:absolute"></div>
<div class="a" style="left:902.0px;width:120px;top:126.8px;font-size:11.5px;color:#333;line-height:13.5px;text-align:center;white-space:nowrap">Transparency</div>
<div class="btn" style="left:884px;top:50px;width:35px;height:22px"></div>
<div class="dd" style="left:908.5px;top:59.5px;border-left-width:2.7px;border-right-width:2.7px;border-top:3.2px solid #222"></div>
<svg class="a" style="left:887px;top:52px" width="20" height="18" viewBox="0 0 20 18"><path d="M2 6 l6 -4 h10 l-6 4z" fill="#8cc8f0" stroke="#2a6ab0"/><path d="M2 10 l6 -4 h10 l-6 4z" fill="#dff0fc" stroke="#333"/><path d="M2 14 l6 -4 h10 l-6 4z" fill="#fff" stroke="#333"/></svg>
<div class="a" style="left:884px;top:74px;width:156px;height:22px;background:#fff;border:1px solid #cfcfcf"></div>
<div class="a" style="left:1010px;top:75px;width:1px;height:20px;background:#d8d8d8"></div>
<div class="a" style="left:886px;top:77px;width:3px;height:16px;border:1px solid #555;border-right:none"></div>
<div class="a" style="left:890px;top:78.3px;font-size:11.5px;color:#333;line-height:13.5px;white-space:nowrap;">Transparency</div>
<div class="a" style="left:1021px;top:78.3px;font-size:11.5px;color:#333;line-height:13.5px;white-space:nowrap;">0</div>
<div class="pnl" style="left:1044px;width:60px"></div>
<div class="pt" style="left:1046px;width:56px;top:124px;height:18px;position:absolute"></div>
<div class="a" style="left:1014.0px;width:120px;top:126.8px;font-size:11.5px;color:#333;line-height:13.5px;text-align:center;white-space:nowrap">Inquiry <span style="display:inline-block;width:0;height:0;border-left:4px solid transparent;border-right:4px solid transparent;border-top:5px solid #444;vertical-align:2px;margin-left:4px"></span></div>
<div class="btn" style="left:1061px;top:50px;width:24px;height:22px"></div>
<div class="btn" style="left:1061px;top:74px;width:24px;height:22px"></div>
<div class="btn" style="left:1061px;top:98px;width:24px;height:22px"></div>
<svg class="a" style="left:1063px;top:52px" width="20" height="18" viewBox="0 0 20 18"><path d="M3 4 v6 M17 4 v6 M3 7 h14" stroke="#222" stroke-width="1.2"/><rect x="3" y="11" width="14" height="5" fill="#f0b830"/><path d="M5 14 h1 M8 14 h1 M11 14 h1 M14 14 h1" stroke="#555"/></svg>
<svg class="a" style="left:1063px;top:76px" width="20" height="18" viewBox="0 0 20 18"><path d="M3.5 2.5 v8 h13z" fill="#fff" stroke="#222"/><rect x="3" y="11" width="14" height="5" fill="#f0b830"/></svg>
<svg class="a" style="left:1063px;top:100px" width="20" height="18" viewBox="0 0 20 18"><rect x="5.5" y="1.5" width="10" height="15" rx="1" fill="#fff" stroke="#333"/><rect x="7" y="3" width="7" height="3" fill="#555"/><rect x="7" y="8" width="1.5" height="1.5" fill="#333"/><rect x="7" y="11" width="1.5" height="1.5" fill="#333"/><rect x="7" y="14" width="1.5" height="1.5" fill="#333"/><rect x="9.8" y="8" width="1.5" height="1.5" fill="#333"/><rect x="9.8" y="11" width="1.5" height="1.5" fill="#333"/><rect x="9.8" y="14" width="1.5" height="1.5" fill="#333"/><rect x="12.5" y="8" width="1.5" height="1.5" fill="#333"/><rect x="12.5" y="11" width="1.5" height="1.5" fill="#333"/><rect x="12.5" y="14" width="1.5" height="1.5" fill="#333"/></svg>
<div class="a" style="left:1105px;top:44px;width:60px;height:98px;background:linear-gradient(#fafafa,#eeeeee);border-left:1px solid #c0c0c0;border-right:1px solid #c8c8c8"></div>
<div class="a" style="left:1166px;top:44px;width:60px;height:98px;background:linear-gradient(#fafafa,#eeeeee);border-right:1px solid #c0c0c0"></div>
<div class="a" style="left:1075px;width:120px;top:54.5px;font-size:11.5px;color:#333;line-height:13.5px;text-align:center;white-space:nowrap">Section...</div>
<div class="a" style="left:1136px;width:120px;top:54.5px;font-size:11.5px;color:#333;line-height:13.5px;text-align:center;white-space:nowrap">Details</div>
<div class="dd" style="left:1131px;top:132.0px;border-left-width:4px;border-right-width:4px;border-top:4px solid #333"></div>
<div class="dd" style="left:1192px;top:132.0px;border-left-width:4px;border-right-width:4px;border-top:4px solid #333"></div>
<svg class="a" style="left:0;top:0" width="1280" height="982" viewBox="0 0 1280 982">
<rect x="2" y="150" width="1276" height="747" fill="#212830"/>
<rect x="0" y="150" width="2" height="747" fill="#9c9c9c"/>
<rect x="1278" y="150" width="2" height="747" fill="#e8e8e8"/>
<rect x="2" y="896" width="1276" height="1.5" fill="#050505"/>
<g shape-rendering="auto">
<rect x="136" y="157" width="426" height="1" fill="#ffffff"/>
<rect x="136" y="472" width="426" height="1" fill="#ffffff"/>
<rect x="125" y="168" width="1" height="295" fill="#ffffff"/>
<rect x="571" y="168" width="1" height="295" fill="#ffffff"/>
<path d="M125.5,167.5 A10,10 0 0 1 135.5,157.5 M561.5,157.5 A10,10 0 0 1 571.5,167.5 M571.5,462.5 A10,10 0 0 1 561.5,472.5 M135.5,472.5 A10,10 0 0 1 125.5,462.5" fill="none" stroke="#fff" stroke-width="1.1"/>
<rect x="198" y="159" width="1" height="313" fill="#ffffff"/>
<rect x="196" y="367" width="1" height="106" fill="#ffffff"/>
<rect x="281" y="195" width="1" height="226" fill="#ffffff"/>
<rect x="303" y="195" width="1" height="226" fill="#ffffff"/>
<rect x="326" y="195" width="1" height="226" fill="#ffffff"/>
<rect x="348" y="195" width="1" height="226" fill="#ffffff"/>
<rect x="371" y="195" width="1" height="226" fill="#ffffff"/>
<rect x="394" y="195" width="1" height="226" fill="#ffffff"/>
<rect x="416" y="195" width="1" height="226" fill="#ffffff"/>
<rect x="439" y="195" width="1" height="226" fill="#ffffff"/>
<rect x="461" y="195" width="1" height="226" fill="#ffffff"/>
<rect x="484" y="195" width="1" height="226" fill="#ffffff"/>
<rect x="506" y="195" width="1" height="226" fill="#ffffff"/>
<rect x="529" y="195" width="1" height="226" fill="#ffffff"/>
<rect x="552" y="195" width="1" height="226" fill="#ffffff"/>
<rect x="281" y="194" width="271" height="1" fill="#ffffff"/>
<rect x="281" y="205" width="271" height="1" fill="#ffffff"/>
<rect x="281" y="217" width="271" height="1" fill="#ffffff"/>
<rect x="281" y="228" width="271" height="1" fill="#ffffff"/>
<rect x="281" y="239" width="271" height="1" fill="#ffffff"/>
<rect x="281" y="251" width="271" height="1" fill="#ffffff"/>
<rect x="281" y="262" width="271" height="1" fill="#ffffff"/>
<rect x="281" y="273" width="271" height="1" fill="#ffffff"/>
<rect x="281" y="285" width="271" height="1" fill="#ffffff"/>
<rect x="281" y="296" width="271" height="1" fill="#ffffff"/>
<rect x="281" y="307" width="271" height="1" fill="#ffffff"/>
<rect x="281" y="319" width="271" height="1" fill="#ffffff"/>
<rect x="281" y="330" width="271" height="1" fill="#ffffff"/>
<rect x="281" y="341" width="271" height="1" fill="#ffffff"/>
<rect x="281" y="352" width="271" height="1" fill="#ffffff"/>
<rect x="281" y="364" width="271" height="1" fill="#ffffff"/>
<rect x="281" y="375" width="271" height="1" fill="#ffffff"/>
<rect x="281" y="386" width="271" height="1" fill="#ffffff"/>
<rect x="281" y="398" width="271" height="1" fill="#ffffff"/>
<rect x="281" y="409" width="271" height="1" fill="#ffffff"/>
<rect x="281" y="420" width="271" height="1" fill="#ffffff"/>
<line x1="281.30" y1="364.25" x2="348.98" y2="420.80" stroke="#ffffff" stroke-width="1.0" />
<line x1="281.30" y1="307.70" x2="416.65" y2="420.80" stroke="#ffffff" stroke-width="1.0" />
<line x1="281.30" y1="251.15" x2="484.33" y2="420.80" stroke="#ffffff" stroke-width="1.0" />
<line x1="281.30" y1="194.60" x2="552.00" y2="420.80" stroke="#ffffff" stroke-width="1.0" />
<line x1="348.98" y1="194.60" x2="552.00" y2="364.25" stroke="#ffffff" stroke-width="1.0" />
<line x1="416.65" y1="194.60" x2="552.00" y2="307.70" stroke="#ffffff" stroke-width="1.0" />
<line x1="484.33" y1="194.60" x2="552.00" y2="251.15" stroke="#ffffff" stroke-width="1.0" />
<line x1="348.98" y1="194.60" x2="281.30" y2="251.15" stroke="#ffffff" stroke-width="1.0" />
<line x1="416.65" y1="194.60" x2="281.30" y2="307.70" stroke="#ffffff" stroke-width="1.0" />
<line x1="484.33" y1="194.60" x2="281.30" y2="364.25" stroke="#ffffff" stroke-width="1.0" />
<line x1="552.00" y1="194.60" x2="281.30" y2="420.80" stroke="#ffffff" stroke-width="1.0" />
<line x1="552.00" y1="251.15" x2="348.98" y2="420.80" stroke="#ffffff" stroke-width="1.0" />
<line x1="552.00" y1="307.70" x2="416.65" y2="420.80" stroke="#ffffff" stroke-width="1.0" />
<line x1="552.00" y1="364.25" x2="484.33" y2="420.80" stroke="#ffffff" stroke-width="1.0" />
<rect x="278.1" y="190.9" width="6.4" height="2" fill="#fff"/><rect x="280.0" y="192.9" width="2.6" height="4" fill="#fff"/><rect x="278.1" y="196.9" width="6.4" height="2" fill="#fff"/>
<rect x="278.1" y="417.0" width="6.4" height="2" fill="#fff"/><rect x="280.0" y="419.0" width="2.6" height="4" fill="#fff"/><rect x="278.1" y="423.0" width="6.4" height="2" fill="#fff"/>
<rect x="345.77500000000003" y="190.9" width="6.4" height="2" fill="#fff"/><rect x="347.675" y="192.9" width="2.6" height="4" fill="#fff"/><rect x="345.77500000000003" y="196.9" width="6.4" height="2" fill="#fff"/>
<rect x="345.77500000000003" y="417.0" width="6.4" height="2" fill="#fff"/><rect x="347.675" y="419.0" width="2.6" height="4" fill="#fff"/><rect x="345.77500000000003" y="423.0" width="6.4" height="2" fill="#fff"/>
<rect x="413.45" y="190.9" width="6.4" height="2" fill="#fff"/><rect x="415.34999999999997" y="192.9" width="2.6" height="4" fill="#fff"/><rect x="413.45" y="196.9" width="6.4" height="2" fill="#fff"/>
<rect x="413.45" y="417.0" width="6.4" height="2" fill="#fff"/><rect x="415.34999999999997" y="419.0" width="2.6" height="4" fill="#fff"/><rect x="413.45" y="423.0" width="6.4" height="2" fill="#fff"/>
<rect x="481.12500000000006" y="190.9" width="6.4" height="2" fill="#fff"/><rect x="483.02500000000003" y="192.9" width="2.6" height="4" fill="#fff"/><rect x="481.12500000000006" y="196.9" width="6.4" height="2" fill="#fff"/>
<rect x="481.12500000000006" y="417.0" width="6.4" height="2" fill="#fff"/><rect x="483.02500000000003" y="419.0" width="2.6" height="4" fill="#fff"/><rect x="481.12500000000006" y="423.0" width="6.4" height="2" fill="#fff"/>
<rect x="548.8" y="190.9" width="6.4" height="2" fill="#fff"/><rect x="550.7" y="192.9" width="2.6" height="4" fill="#fff"/><rect x="548.8" y="196.9" width="6.4" height="2" fill="#fff"/>
<rect x="548.8" y="417.0" width="6.4" height="2" fill="#fff"/><rect x="550.7" y="419.0" width="2.6" height="4" fill="#fff"/><rect x="548.8" y="423.0" width="6.4" height="2" fill="#fff"/>
<rect x="279.1" y="280.3" width="4.4" height="4.4" fill="#212830" stroke="#fff" stroke-width="1"/>
<rect x="549.8" y="280.3" width="4.4" height="4.4" fill="#212830" stroke="#fff" stroke-width="1"/>
<rect x="279.1" y="329.3" width="4.4" height="4.4" fill="#212830" stroke="#fff" stroke-width="1"/>
<rect x="549.8" y="329.3" width="4.4" height="4.4" fill="#212830" stroke="#fff" stroke-width="1"/>
<rect x="341" y="171" width="65" height="1" fill="#ffffff"/>
<line x1="406.00" y1="171.30" x2="395.00" y2="201.30" stroke="#ffffff" stroke-width="1" />
<line x1="406.00" y1="171.30" x2="438.80" y2="201.30" stroke="#ffffff" stroke-width="1" />
<rect x="420" y="171" width="32" height="1" fill="#ffffff"/>
<line x1="452.00" y1="171.30" x2="455.00" y2="214.50" stroke="#ffffff" stroke-width="1" />
<line x1="452.00" y1="171.30" x2="473.80" y2="203.80" stroke="#ffffff" stroke-width="1" />
<text x="348.00" y="170.20" font-family="Liberation Sans" font-size="5.2" font-weight="bold" fill="#ffffff" text-anchor="start" letter-spacing="0.6">SAGRODS</text>
<rect x="380.8" y="165.8" width="5.5" height="4.5" fill="#1010a0"/>
<text x="387.50" y="170.20" font-family="Liberation Sans" font-size="5.2" font-weight="bold" fill="#ffffff" text-anchor="start" >12</text>
<text x="425.00" y="170.20" font-family="Liberation Sans" font-size="5.2" font-weight="bold" fill="#ffffff" text-anchor="start" letter-spacing="0.4">PURLINS</text>
<rect x="236" y="241" width="34" height="1" fill="#ffffff"/>
<line x1="269.70" y1="241.40" x2="299.50" y2="235.30" stroke="#ffffff" stroke-width="1" />
<line x1="269.70" y1="241.40" x2="299.00" y2="290.00" stroke="#ffffff" stroke-width="1" />
<rect x="240.8" y="234.4" width="5.5" height="5.4" fill="#1010a0"/>
<text x="247.80" y="239.80" font-family="Liberation Sans" font-size="5.2" font-weight="bold" fill="#ffffff" text-anchor="start" >19</text>
<text x="378.5" y="443.5" font-size="10.5" font-weight="bold" fill="#fff" font-family="Liberation Sans" textLength="93.5" lengthAdjust="spacingAndGlyphs">پـــلان تـــیرریزی سـقـف</text>
<rect x="381" y="449" width="58" height="2" fill="#ffffff"/>
<text x="411" y="457.8" font-size="5" font-weight="bold" fill="#fff" text-anchor="middle" font-family="Liberation Sans">مقیاس : ۱:۱۰۰</text>
<rect x="690" y="190" width="424" height="1" fill="#ffffff"/>
<rect x="690" y="506" width="424" height="1" fill="#ffffff"/>
<rect x="678" y="202" width="1" height="294" fill="#ffffff"/>
<rect x="1124" y="202" width="1" height="294" fill="#ffffff"/>
<path d="M678.5,201.5 A11,11 0 0 1 689.5,190.5 M1113.5,190.5 A11,11 0 0 1 1124.5,201.5 M1124.5,495.5 A11,11 0 0 1 1113.5,506.5 M689.5,506.5 A11,11 0 0 1 678.5,495.5" fill="none" stroke="#fff" stroke-width="1.1"/>
<rect x="750" y="192" width="1" height="314" fill="#ffffff"/>
<rect x="748" y="400" width="1" height="106" fill="#ffffff"/>
<path d="M680.5,202.5 A10,10 0 0 1 690.5,192.5" fill="none" stroke="#fff" stroke-width="1"/>
<rect x="690" y="192" width="60" height="1" fill="#ffffff"/>
<rect x="767" y="226" width="271" height="1" fill="#ffffff"/>
<rect x="767" y="249" width="271" height="1" fill="#ffffff"/>
<rect x="758" y="293" width="280" height="1" fill="#ffffff"/>
<rect x="767" y="226" width="1" height="67" fill="#ffffff"/>
<rect x="835" y="226" width="1" height="67" fill="#ffffff"/>
<rect x="903" y="226" width="1" height="67" fill="#ffffff"/>
<rect x="970" y="226" width="1" height="67" fill="#ffffff"/>
<rect x="1038" y="226" width="1" height="67" fill="#ffffff"/>
<line x1="767.20" y1="249.20" x2="835.30" y2="293.90" stroke="#ffffff" stroke-width="1" />
<line x1="767.20" y1="293.90" x2="835.30" y2="249.20" stroke="#ffffff" stroke-width="1" />
<line x1="970.40" y1="249.20" x2="1038.30" y2="293.90" stroke="#ffffff" stroke-width="1" />
<line x1="970.40" y1="293.90" x2="1038.30" y2="249.20" stroke="#ffffff" stroke-width="1" />
<circle cx="801.2" cy="271.3" r="6" fill="none" stroke="#fff" stroke-width="1"/>
<text x="798.50" y="282.90" font-family="Liberation Sans" font-size="5" font-weight="bold" fill="#ffffff" text-anchor="start" >D1</text>
<circle cx="834.8" cy="248.8" r="6" fill="none" stroke="#fff" stroke-width="1"/>
<text x="838.00" y="259.90" font-family="Liberation Sans" font-size="5" font-weight="bold" fill="#ffffff" text-anchor="start" >D2</text>
<text x="888.00" y="330.70" font-family="Liberation Serif" font-size="16.5" font-weight="normal" fill="#ffffff" text-anchor="start" textLength="87" lengthAdjust="spacingAndGlyphs" stroke="#fff" stroke-width="0.55">BRACINGS1</text>
<rect x="906" y="333" width="48" height="1" fill="#ffffff"/>
<circle cx="836.6" cy="370.20000000000005" r="51.1" fill="none" stroke="#fff" stroke-width="1"/>
<rect x="810.2" y="345.1" width="54.4" height="50.6" fill="none" stroke="#fff" stroke-width="1.1"/>
<line x1="789.00" y1="388.80" x2="872.70" y2="334.03" stroke="#fff" stroke-width="1" opacity="1"/>
<line x1="798.28" y1="404.00" x2="882.92" y2="348.61" stroke="#fff" stroke-width="1" opacity="1"/>
<line x1="793.82" y1="396.28" x2="877.62" y2="341.44" stroke="#fff" stroke-width="5.2" opacity="0.86"/>
<line x1="812.44" y1="373.46" x2="844.24" y2="352.65" stroke="#fff" stroke-width="1.8" opacity="1"/>
<line x1="830.56" y1="382.88" x2="862.35" y2="362.07" stroke="#fff" stroke-width="1.8" opacity="1"/>
<line x1="804.18" y1="330.70" x2="840.98" y2="354.78" stroke="#fff" stroke-width="1" opacity="1"/>
<line x1="857.24" y1="365.42" x2="885.77" y2="384.09" stroke="#fff" stroke-width="1" opacity="1"/>
<line x1="787.81" y1="355.00" x2="814.23" y2="372.29" stroke="#fff" stroke-width="1" opacity="1"/>
<line x1="830.48" y1="382.93" x2="870.06" y2="408.82" stroke="#fff" stroke-width="1" opacity="1"/>
<line x1="794.68" y1="342.77" x2="814.01" y2="355.42" stroke="#fff" stroke-width="4.2" opacity="0.9"/>
<line x1="860.87" y1="386.08" x2="878.52" y2="397.63" stroke="#fff" stroke-width="4.2" opacity="0.9"/>
<line x1="820.38" y1="354.81" x2="832.10" y2="362.47" stroke="#fff" stroke-width="1" opacity="1" stroke-dasharray="2 2"/>
<line x1="814.33" y1="360.41" x2="826.04" y2="368.07" stroke="#fff" stroke-width="1" opacity="1" stroke-dasharray="2 2"/>
<line x1="847.71" y1="371.49" x2="861.09" y2="380.25" stroke="#fff" stroke-width="1" opacity="1" stroke-dasharray="2 2"/>
<line x1="840.56" y1="378.76" x2="853.94" y2="387.53" stroke="#fff" stroke-width="1" opacity="1" stroke-dasharray="2 2"/>
<circle cx="1038.5" cy="368.70000000000005" r="51.3" fill="none" stroke="#fff" stroke-width="1"/>
<rect x="999" y="336" width="68" height="1" fill="#ffffff"/>
<rect x="994" y="343" width="73" height="1" fill="#ffffff"/>
<rect x="1067" y="329" width="1" height="82" fill="#ffffff"/>
<rect x="1073" y="332" width="1" height="73" fill="#ffffff"/>
<rect x="1012" y="344" width="54" height="1" fill="#ffffff"/>
<rect x="1012" y="345" width="1" height="30" fill="#ffffff"/>
<rect x="1022" y="393" width="44" height="1" fill="#ffffff"/>
<rect x="1065" y="345" width="1" height="48" fill="#ffffff"/>
<line x1="990.65" y1="387.18" x2="1067.10" y2="336.58" stroke="#fff" stroke-width="1.1" opacity="1"/>
<line x1="1000.19" y1="402.81" x2="1067.10" y2="358.52" stroke="#fff" stroke-width="1.1" opacity="1"/>
<line x1="994.48" y1="393.04" x2="1067.10" y2="344.97" stroke="#fff" stroke-width="4.6" opacity="0.92"/>
<text x="827.50" y="434.40" font-family="Liberation Serif" font-size="14" font-weight="normal" fill="#ffffff" text-anchor="start" textLength="19" lengthAdjust="spacingAndGlyphs" stroke="#fff" stroke-width="0.6">D1</text>
<rect x="810" y="436" width="48" height="2" fill="#ffffff"/>
<text x="1030.00" y="433.80" font-family="Liberation Serif" font-size="14" font-weight="normal" fill="#ffffff" text-anchor="start" textLength="19.6" lengthAdjust="spacingAndGlyphs" stroke="#fff" stroke-width="0.6">D2</text>
<rect x="1010" y="435" width="50" height="2" fill="#ffffff"/>
<rect x="899" y="360" width="27" height="1" fill="#ffffff"/>
<line x1="899.00" y1="360.40" x2="855.00" y2="349.00" stroke="#ffffff" stroke-width="1" />
<line x1="899.00" y1="360.40" x2="874.80" y2="387.70" stroke="#ffffff" stroke-width="1" />
<text x="901.00" y="358.70" font-family="Liberation Sans" font-size="4.8" font-weight="bold" fill="#ffffff" text-anchor="start" >1 ⌐80X80X8</text>
<rect x="867" y="429" width="45" height="1" fill="#ffffff"/>
<line x1="867.30" y1="429.30" x2="832.20" y2="391.10" stroke="#ffffff" stroke-width="1" />
<text x="868.50" y="427.20" font-family="Liberation Sans" font-size="4.5" font-weight="bold" fill="#ffffff" text-anchor="start" >⌐80X80X8 10 mm</text>
<rect x="1080" y="321" width="37" height="1" fill="#ffffff"/>
<line x1="1079.80" y1="321.40" x2="1067.70" y2="343.50" stroke="#ffffff" stroke-width="1" />
<text x="1081.00" y="319.40" font-family="Liberation Sans" font-size="5" font-weight="bold" fill="#ffffff" text-anchor="start" >2 ⌐80X80X8</text>
<rect x="1068" y="428" width="46" height="1" fill="#ffffff"/>
<line x1="1067.70" y1="428.30" x2="1034.20" y2="389.10" stroke="#ffffff" stroke-width="1" />
<text x="1069.00" y="426.20" font-family="Liberation Sans" font-size="4.5" font-weight="bold" fill="#ffffff" text-anchor="start" >⌐80X80X8 10 mm</text>
<rect x="192" y="574" width="423" height="1" fill="#ffffff"/>
<rect x="192" y="889" width="423" height="1" fill="#ffffff"/>
<rect x="181" y="586" width="1" height="293" fill="#ffffff"/>
<rect x="626" y="586" width="1" height="293" fill="#ffffff"/>
<path d="M181.5,585.5 A11,11 0 0 1 192.5,574.5 M615.5,574.5 A11,11 0 0 1 626.5,585.5 M626.5,878.5 A11,11 0 0 1 615.5,889.5 M192.5,889.5 A11,11 0 0 1 181.5,878.5" fill="none" stroke="#fff" stroke-width="1.1"/>
<rect x="253" y="576" width="1" height="314" fill="#ffffff"/>
<rect x="251" y="784" width="1" height="106" fill="#ffffff"/>
<path d="M183.5,586.5 A10,10 0 0 1 193.5,576.5" fill="none" stroke="#fff" stroke-width="1"/>
<rect x="194" y="576" width="60" height="1" fill="#ffffff"/>
<rect x="270" y="610" width="271" height="1" fill="#ffffff"/>
<rect x="270" y="632" width="271" height="1" fill="#ffffff"/>
<rect x="260" y="677" width="280" height="1" fill="#ffffff"/>
<rect x="269" y="610" width="1" height="68" fill="#ffffff"/>
<rect x="337" y="610" width="1" height="68" fill="#ffffff"/>
<rect x="406" y="610" width="1" height="68" fill="#ffffff"/>
<rect x="472" y="610" width="1" height="68" fill="#ffffff"/>
<rect x="540" y="610" width="1" height="68" fill="#ffffff"/>
<line x1="269.70" y1="632.80" x2="337.80" y2="677.50" stroke="#ffffff" stroke-width="1" />
<line x1="269.70" y1="677.50" x2="337.80" y2="632.80" stroke="#ffffff" stroke-width="1" />
<line x1="472.90" y1="632.80" x2="540.80" y2="677.50" stroke="#ffffff" stroke-width="1" />
<line x1="472.90" y1="677.50" x2="540.80" y2="632.80" stroke="#ffffff" stroke-width="1" />
<circle cx="303.7" cy="654.9" r="6" fill="none" stroke="#fff" stroke-width="1"/>
<text x="301.00" y="666.50" font-family="Liberation Sans" font-size="5" font-weight="bold" fill="#ffffff" text-anchor="start" >D1</text>
<circle cx="337.3" cy="632.4" r="6" fill="none" stroke="#fff" stroke-width="1"/>
<text x="340.50" y="643.50" font-family="Liberation Sans" font-size="5" font-weight="bold" fill="#ffffff" text-anchor="start" >D2</text>
<text x="390.50" y="714.30" font-family="Liberation Serif" font-size="16.5" font-weight="normal" fill="#ffffff" text-anchor="start" textLength="87" lengthAdjust="spacingAndGlyphs" stroke="#fff" stroke-width="0.55">BRACINGS3</text>
<rect x="408" y="716" width="48" height="1" fill="#ffffff"/>
<circle cx="339.1" cy="753.8" r="51.1" fill="none" stroke="#fff" stroke-width="1"/>
<rect x="312.70000000000005" y="728.6999999999999" width="54.4" height="50.6" fill="none" stroke="#fff" stroke-width="1.1"/>
<line x1="291.50" y1="772.40" x2="375.20" y2="717.63" stroke="#fff" stroke-width="1" opacity="1"/>
<line x1="300.78" y1="787.60" x2="385.42" y2="732.21" stroke="#fff" stroke-width="1" opacity="1"/>
<line x1="295.34" y1="778.26" x2="379.03" y2="723.49" stroke="#fff" stroke-width="1.6" opacity="1"/>
<line x1="314.94" y1="757.06" x2="346.74" y2="736.25" stroke="#fff" stroke-width="1.8" opacity="1"/>
<line x1="333.06" y1="766.48" x2="364.85" y2="745.67" stroke="#fff" stroke-width="1.8" opacity="1"/>
<line x1="306.68" y1="714.30" x2="343.48" y2="738.38" stroke="#fff" stroke-width="1" opacity="1"/>
<line x1="359.74" y1="749.02" x2="388.27" y2="767.69" stroke="#fff" stroke-width="1" opacity="1"/>
<line x1="290.31" y1="738.60" x2="316.73" y2="755.89" stroke="#fff" stroke-width="1" opacity="1"/>
<line x1="332.98" y1="766.53" x2="372.56" y2="792.42" stroke="#fff" stroke-width="1" opacity="1"/>
<line x1="322.88" y1="738.41" x2="334.60" y2="746.07" stroke="#fff" stroke-width="1" opacity="1" stroke-dasharray="2 2"/>
<line x1="316.83" y1="744.01" x2="328.54" y2="751.67" stroke="#fff" stroke-width="1" opacity="1" stroke-dasharray="2 2"/>
<line x1="350.21" y1="755.09" x2="363.59" y2="763.85" stroke="#fff" stroke-width="1" opacity="1" stroke-dasharray="2 2"/>
<line x1="343.06" y1="762.36" x2="356.44" y2="771.13" stroke="#fff" stroke-width="1" opacity="1" stroke-dasharray="2 2"/>
<circle cx="541.0" cy="752.3" r="51.3" fill="none" stroke="#fff" stroke-width="1"/>
<rect x="502" y="719" width="68" height="1" fill="#ffffff"/>
<rect x="497" y="727" width="73" height="1" fill="#ffffff"/>
<rect x="569" y="713" width="1" height="82" fill="#ffffff"/>
<rect x="576" y="716" width="1" height="73" fill="#ffffff"/>
<rect x="514" y="728" width="54" height="1" fill="#ffffff"/>
<rect x="514" y="728" width="1" height="30" fill="#ffffff"/>
<rect x="524" y="776" width="44" height="1" fill="#ffffff"/>
<rect x="568" y="728" width="1" height="48" fill="#ffffff"/>
<line x1="493.15" y1="770.78" x2="569.60" y2="720.18" stroke="#fff" stroke-width="1.1" opacity="1"/>
<line x1="502.69" y1="786.41" x2="569.60" y2="742.12" stroke="#fff" stroke-width="1.1" opacity="1"/>
<line x1="496.98" y1="776.64" x2="569.60" y2="728.57" stroke="#fff" stroke-width="2.2" opacity="0.92"/>
<text x="330.00" y="818.00" font-family="Liberation Serif" font-size="14" font-weight="normal" fill="#ffffff" text-anchor="start" textLength="19" lengthAdjust="spacingAndGlyphs" stroke="#fff" stroke-width="0.6">D1</text>
<rect x="312" y="820" width="48" height="2" fill="#ffffff"/>
<text x="532.50" y="817.40" font-family="Liberation Serif" font-size="14" font-weight="normal" fill="#ffffff" text-anchor="start" textLength="19.6" lengthAdjust="spacingAndGlyphs" stroke="#fff" stroke-width="0.6">D2</text>
<rect x="512" y="819" width="50" height="2" fill="#ffffff"/>
<rect x="402" y="744" width="27" height="1" fill="#ffffff"/>
<line x1="401.50" y1="744.00" x2="357.50" y2="732.60" stroke="#ffffff" stroke-width="1" />
<line x1="401.50" y1="744.00" x2="377.30" y2="771.30" stroke="#ffffff" stroke-width="1" />
<text x="403.50" y="742.30" font-family="Liberation Sans" font-size="4.8" font-weight="bold" fill="#ffffff" text-anchor="start" >1 ⌐80X80X8</text>
<rect x="370" y="812" width="45" height="1" fill="#ffffff"/>
<line x1="369.80" y1="812.90" x2="334.70" y2="774.70" stroke="#ffffff" stroke-width="1" />
<text x="371.00" y="810.80" font-family="Liberation Sans" font-size="4.5" font-weight="bold" fill="#ffffff" text-anchor="start" >⌐80X80X8 10 mm</text>
<rect x="582" y="704" width="37" height="1" fill="#ffffff"/>
<line x1="582.30" y1="705.00" x2="570.20" y2="727.10" stroke="#ffffff" stroke-width="1" />
<text x="583.50" y="703.00" font-family="Liberation Sans" font-size="5" font-weight="bold" fill="#ffffff" text-anchor="start" >2 ⌐80X80X8</text>
<rect x="570" y="811" width="46" height="1" fill="#ffffff"/>
<line x1="570.20" y1="811.90" x2="536.70" y2="772.70" stroke="#ffffff" stroke-width="1" />
<text x="571.50" y="809.80" font-family="Liberation Sans" font-size="4.5" font-weight="bold" fill="#ffffff" text-anchor="start" >⌐80X80X8 10 mm</text>
<rect x="690" y="574" width="424" height="1" fill="#ffffff"/>
<rect x="690" y="889" width="424" height="1" fill="#ffffff"/>
<rect x="678" y="586" width="1" height="293" fill="#ffffff"/>
<rect x="1124" y="586" width="1" height="293" fill="#ffffff"/>
<path d="M678.5,585.5 A11,11 0 0 1 689.5,574.5 M1113.5,574.5 A11,11 0 0 1 1124.5,585.5 M1124.5,878.5 A11,11 0 0 1 1113.5,889.5 M689.5,889.5 A11,11 0 0 1 678.5,878.5" fill="none" stroke="#fff" stroke-width="1.1"/>
<rect x="750" y="576" width="1" height="314" fill="#ffffff"/>
<rect x="748" y="784" width="1" height="106" fill="#ffffff"/>
<path d="M680.5,586.5 A10,10 0 0 1 690.5,576.5" fill="none" stroke="#fff" stroke-width="1"/>
<rect x="690" y="576" width="60" height="1" fill="#ffffff"/>
<rect x="767" y="610" width="271" height="1" fill="#ffffff"/>
<rect x="767" y="632" width="271" height="1" fill="#ffffff"/>
<rect x="758" y="677" width="280" height="1" fill="#ffffff"/>
<rect x="767" y="610" width="1" height="68" fill="#ffffff"/>
<rect x="835" y="610" width="1" height="68" fill="#ffffff"/>
<rect x="903" y="610" width="1" height="68" fill="#ffffff"/>
<rect x="970" y="610" width="1" height="68" fill="#ffffff"/>
<rect x="1038" y="610" width="1" height="68" fill="#ffffff"/>
<line x1="767.20" y1="632.80" x2="835.30" y2="677.50" stroke="#ffffff" stroke-width="1" />
<line x1="767.20" y1="677.50" x2="835.30" y2="632.80" stroke="#ffffff" stroke-width="1" />
<line x1="970.40" y1="632.80" x2="1038.30" y2="677.50" stroke="#ffffff" stroke-width="1" />
<line x1="970.40" y1="677.50" x2="1038.30" y2="632.80" stroke="#ffffff" stroke-width="1" />
<circle cx="801.2" cy="654.9" r="6" fill="none" stroke="#fff" stroke-width="1"/>
<text x="798.50" y="666.50" font-family="Liberation Sans" font-size="5" font-weight="bold" fill="#ffffff" text-anchor="start" >D1</text>
<circle cx="834.8" cy="632.4" r="6" fill="none" stroke="#fff" stroke-width="1"/>
<text x="838.00" y="643.50" font-family="Liberation Sans" font-size="5" font-weight="bold" fill="#ffffff" text-anchor="start" >D2</text>
<text x="888.00" y="714.30" font-family="Liberation Serif" font-size="16.5" font-weight="normal" fill="#ffffff" text-anchor="start" textLength="87" lengthAdjust="spacingAndGlyphs" stroke="#fff" stroke-width="0.55">BRACINGS2</text>
<rect x="906" y="716" width="48" height="1" fill="#ffffff"/>
<circle cx="836.6" cy="753.8" r="51.1" fill="none" stroke="#fff" stroke-width="1"/>
<rect x="810.2" y="728.6999999999999" width="54.4" height="50.6" fill="none" stroke="#fff" stroke-width="1.1"/>
<line x1="789.00" y1="772.40" x2="872.70" y2="717.63" stroke="#fff" stroke-width="1" opacity="1"/>
<line x1="798.28" y1="787.60" x2="882.92" y2="732.21" stroke="#fff" stroke-width="1" opacity="1"/>
<line x1="793.82" y1="779.88" x2="877.62" y2="725.04" stroke="#fff" stroke-width="5.2" opacity="0.86"/>
<line x1="812.44" y1="757.06" x2="844.24" y2="736.25" stroke="#fff" stroke-width="1.8" opacity="1"/>
<line x1="830.56" y1="766.48" x2="862.35" y2="745.67" stroke="#fff" stroke-width="1.8" opacity="1"/>
<line x1="804.18" y1="714.30" x2="840.98" y2="738.38" stroke="#fff" stroke-width="1" opacity="1"/>
<line x1="857.24" y1="749.02" x2="885.77" y2="767.69" stroke="#fff" stroke-width="1" opacity="1"/>
<line x1="787.81" y1="738.60" x2="814.23" y2="755.89" stroke="#fff" stroke-width="1" opacity="1"/>
<line x1="830.48" y1="766.53" x2="870.06" y2="792.42" stroke="#fff" stroke-width="1" opacity="1"/>
<line x1="794.68" y1="726.37" x2="814.01" y2="739.02" stroke="#fff" stroke-width="4.2" opacity="0.9"/>
<line x1="860.87" y1="769.68" x2="878.52" y2="781.23" stroke="#fff" stroke-width="4.2" opacity="0.9"/>
<line x1="820.38" y1="738.41" x2="832.10" y2="746.07" stroke="#fff" stroke-width="1" opacity="1" stroke-dasharray="2 2"/>
<line x1="814.33" y1="744.01" x2="826.04" y2="751.67" stroke="#fff" stroke-width="1" opacity="1" stroke-dasharray="2 2"/>
<line x1="847.71" y1="755.09" x2="861.09" y2="763.85" stroke="#fff" stroke-width="1" opacity="1" stroke-dasharray="2 2"/>
<line x1="840.56" y1="762.36" x2="853.94" y2="771.13" stroke="#fff" stroke-width="1" opacity="1" stroke-dasharray="2 2"/>
<circle cx="1038.5" cy="752.3" r="51.3" fill="none" stroke="#fff" stroke-width="1"/>
<rect x="999" y="719" width="68" height="1" fill="#ffffff"/>
<rect x="994" y="727" width="73" height="1" fill="#ffffff"/>
<rect x="1067" y="713" width="1" height="82" fill="#ffffff"/>
<rect x="1073" y="716" width="1" height="73" fill="#ffffff"/>
<rect x="1012" y="728" width="54" height="1" fill="#ffffff"/>
<rect x="1012" y="728" width="1" height="30" fill="#ffffff"/>
<rect x="1022" y="776" width="44" height="1" fill="#ffffff"/>
<rect x="1065" y="728" width="1" height="48" fill="#ffffff"/>
<line x1="990.65" y1="770.78" x2="1067.10" y2="720.18" stroke="#fff" stroke-width="1.1" opacity="1"/>
<line x1="1000.19" y1="786.41" x2="1067.10" y2="742.12" stroke="#fff" stroke-width="1.1" opacity="1"/>
<line x1="994.48" y1="776.64" x2="1067.10" y2="728.57" stroke="#fff" stroke-width="4.6" opacity="0.92"/>
<text x="827.50" y="818.00" font-family="Liberation Serif" font-size="14" font-weight="normal" fill="#ffffff" text-anchor="start" textLength="19" lengthAdjust="spacingAndGlyphs" stroke="#fff" stroke-width="0.6">D1</text>
<rect x="810" y="820" width="48" height="2" fill="#ffffff"/>
<text x="1030.00" y="817.40" font-family="Liberation Serif" font-size="14" font-weight="normal" fill="#ffffff" text-anchor="start" textLength="19.6" lengthAdjust="spacingAndGlyphs" stroke="#fff" stroke-width="0.6">D2</text>
<rect x="1010" y="819" width="50" height="2" fill="#ffffff"/>
<rect x="899" y="744" width="27" height="1" fill="#ffffff"/>
<line x1="899.00" y1="744.00" x2="855.00" y2="732.60" stroke="#ffffff" stroke-width="1" />
<line x1="899.00" y1="744.00" x2="874.80" y2="771.30" stroke="#ffffff" stroke-width="1" />
<text x="901.00" y="742.30" font-family="Liberation Sans" font-size="4.8" font-weight="bold" fill="#ffffff" text-anchor="start" >1 ⌐80X80X8</text>
<rect x="867" y="812" width="45" height="1" fill="#ffffff"/>
<line x1="867.30" y1="812.90" x2="832.20" y2="774.70" stroke="#ffffff" stroke-width="1" />
<text x="868.50" y="810.80" font-family="Liberation Sans" font-size="4.5" font-weight="bold" fill="#ffffff" text-anchor="start" >⌐80X80X8 10 mm</text>
<rect x="1080" y="704" width="37" height="1" fill="#ffffff"/>
<line x1="1079.80" y1="705.00" x2="1067.70" y2="727.10" stroke="#ffffff" stroke-width="1" />
<text x="1081.00" y="703.00" font-family="Liberation Sans" font-size="5" font-weight="bold" fill="#ffffff" text-anchor="start" >2 ⌐80X80X8</text>
<rect x="1068" y="811" width="46" height="1" fill="#ffffff"/>
<line x1="1067.70" y1="811.90" x2="1034.20" y2="772.70" stroke="#ffffff" stroke-width="1" />
<text x="1069.00" y="809.80" font-family="Liberation Sans" font-size="4.5" font-weight="bold" fill="#ffffff" text-anchor="start" >⌐80X80X8 10 mm</text>
<line x1="51.30" y1="852.00" x2="83.80" y2="885.00" stroke="#e8e8e8" stroke-width="1.1" />
<line x1="83.80" y1="852.00" x2="51.30" y2="885.00" stroke="#e8e8e8" stroke-width="1.1" />
<rect x="2" y="890" width="36" height="1" fill="#f0f0f0"/>
</g>
</svg>
<div class="a" style="left:6px;top:156px;font-size:12.5px;line-height:15px;color:#e8e8e8;white-space:nowrap;-webkit-text-stroke:0.25px #e8e8e8">[−] [Top] [2D Wireframe]</div>
<svg class="a" style="left:1210px;top:155px" width="64" height="18"><rect x="8" y="9.7" width="10" height="3.5" fill="#f4f4f4"/><rect x="28.5" y="6.5" width="7" height="7" fill="none" stroke="#f4f4f4" stroke-width="2"/><path d="M31 4.5 v-0.5 h7 v7 h-1" fill="none" stroke="#f4f4f4" stroke-width="1.5"/><path d="M48 4.5 l9 9 M57 4.5 l-9 9" stroke="#f4f4f4" stroke-width="2.6"/></svg>
<svg class="a" style="left:1130px;top:185px" width="132" height="180" viewBox="1130 185 132 180">
<circle cx="1195.8" cy="254.6" r="52.6" fill="none" stroke="#434950" stroke-width="13.4"/>
<rect x="1170.4" y="229.2" width="51.1" height="51.3" fill="#a6a8aa"/>
<rect x="1180.5" y="239" width="31.4" height="31.7" fill="#999da2"/>
<text x="1185.4" y="259.7" font-family="Liberation Sans" font-weight="bold" font-size="14" fill="#4c5159" stroke="#4c5159" stroke-width="0.5" textLength="21" lengthAdjust="spacingAndGlyphs">TOP</text>
<text x="1189.4" y="206.5" font-family="Liberation Sans" font-weight="bold" font-size="20.5" fill="#adafb2" stroke="#adafb2" stroke-width="0.9" textLength="12.9" lengthAdjust="spacingAndGlyphs">N</text>
<text x="1189.4" y="318.6" font-family="Liberation Sans" font-weight="bold" font-size="20.5" fill="#adafb2" stroke="#adafb2" stroke-width="0.9" textLength="12.9" lengthAdjust="spacingAndGlyphs">S</text>
<text x="1130" y="263.2" font-family="Liberation Sans" font-weight="bold" font-size="20.5" fill="#adafb2" stroke="#adafb2" stroke-width="0.9" textLength="19.8" lengthAdjust="spacingAndGlyphs">W</text>
<text x="1246.2" y="263.2" font-family="Liberation Sans" font-weight="bold" font-size="20.5" fill="#adafb2" stroke="#adafb2" stroke-width="0.9" textLength="12.1" lengthAdjust="spacingAndGlyphs">E</text>
<rect x="1172.5" y="342.8" width="47" height="16.5" rx="4" fill="#838993" stroke="#9aa0a8" stroke-width="1"/>
<text x="1176.5" y="355.2" font-family="Liberation Sans" font-size="10" fill="#51565e">WCS</text>
<path d="M1205 348.5 h8 l-4 4.5z" fill="none" stroke="#5a6068" stroke-width=".9"/>
</svg>
<svg class="a" style="left:1242px;top:384px" width="34" height="214" viewBox="0 0 34 214">
<rect x="0.8" y="0.7" width="32.2" height="212.1" rx="5" fill="#52585f"/>
<g fill="none" stroke="#3e444b" stroke-width="1.2">
<circle cx="27.3" cy="5.5" r="2.6"/>
<circle cx="17" cy="30.5" r="11"/><circle cx="17" cy="30" r="6.5"/><path d="M6.5 33 l5 -1 M27.5 33 l-5 -1 M17 36.5 v5"/>
<path d="M10 83 q-5 -3 -6 -10 l2 -1 l4 4 v-12 q1.2 -1.8 2.4 0 v9 v-12 q1.2 -1.8 2.4 0 v12 v-11 q1.2 -1.8 2.4 0 v11 v-8 q1.2 -1.8 2.4 0 v11 q0 7 -5 9z"/>
<path d="M5 89 l12 12 M5 89 v4 M5 89 h4 M5 101 l12 -12 M17 89 h-4 M17 89 v4 M5 101 v-4 M5 101 h4"/><circle cx="21" cy="105" r="4.5"/><path d="M24.5 108.5 l4 4" stroke-width="1.8"/>
<path d="M17 128 l-5 6 h3 v16 h4 v-16 h3 z"/><path d="M12 140 q-10 3 -2 7 q7 3 16 0 q7 -3 0 -7"/><path d="M10 147 l3 2 l-3 2"/>
<rect x="4.5" y="171" width="6" height="5.5"/><rect x="12" y="171" width="6" height="5.5"/><rect x="19.5" y="171" width="6" height="5.5"/><rect x="4.5" y="179" width="16" height="13"/>
<circle cx="27.5" cy="207" r="2.8"/>
</g>
<path d="M9 182 l7 3.5 l-7 3.5z" fill="#3e444b"/>
<path d="M14 50 h6 l-3 3z M14 119 h6 l-3 3z M14 158 h6 l-3 3z" fill="#3e444b"/>
</svg>

<div class="a" style="left:0;top:897.5px;width:1280px;height:23.5px;background:linear-gradient(#a4a4a4,#959595 12%,#7a7a7a)"></div>
<div class="a" style="left:0;top:897.5px;width:2px;height:23.5px;background:#b4b4b4"></div>
<div class="a" style="left:0;top:921px;width:1280px;height:2px;background:#f8f8f8"></div>
<div class="a" style="left:0;top:923px;width:1280px;height:4px;background:#686868"></div>
<div class="a" style="left:1112.5px;top:899px;width:50.5px;height:21px;background:linear-gradient(#c4c4c4,#a8a8a8);border-left:1px solid #7a7a7a"></div>
<div class="a" style="left:1163px;top:899px;width:22px;height:21px;background:linear-gradient(#c4c4c4,#a8a8a8);border-left:1px solid #7a7a7a"></div>
<div class="a" style="left:1185px;top:899px;width:22px;height:21px;background:linear-gradient(#c4c4c4,#a8a8a8);border-left:1px solid #7a7a7a"></div>
<div class="a" style="left:1216px;top:899px;width:46px;height:21px;background:linear-gradient(#b4b4b4,#9c9c9c);border-left:1px solid #7a7a7a"></div>
<div class="a" style="left:1267px;top:899px;width:13px;height:21px;background:linear-gradient(#c4c4c4,#a8a8a8);border-left:1px solid #7a7a7a"></div>
<svg class="a" style="left:1112px;top:898px" width="168" height="23" viewBox="1112 898 168 23">
<g fill="#fff" stroke="#333" stroke-width=".7">
<path d="M1123 902 l2 6 l5 5 l-4 0 l-3 -3 l-3 3 l-4 0 l5 -5z"/>
<path d="M1175 902 l2 6 l5 5 l-4 0 l-3 -3 l-3 3 l-4 0 l5 -5z"/>
<path d="M1196 902 l2 6 l5 5 l-4 0 l-3 -3 l-3 3 l-4 0 l5 -5z"/>
</g>
<circle cx="1180" cy="913" r="3" fill="#f8c030"/>
<path d="M1190 903 l3 -2 l-1 3 l3 -1" stroke="#f0a020" fill="none" stroke-width="1.3"/>
<path d="M1154 907 h8 l-4 4.5z" fill="#111"/>
<rect x="1222" y="903" width="12" height="13" fill="#3a70c0" stroke="#234" stroke-width=".6"/><path d="M1226 914 l3 3 l6 -7" stroke="#3aa030" stroke-width="2" fill="none"/><rect x="1222" y="910" width="10" height="6" fill="#f0d050"/>
<path d="M1250 902 q-5 0 -5 6 q0 3 3 5 v3 h4 v-3 q3 -2 3 -5 q0 -6 -5 -6z" fill="#f8e89a" stroke="#666" stroke-width=".6"/>
<path d="M1271 908 h6 l-3 4z" fill="#111"/>
</svg>
<div class="a" style="left:1133px;top:903px;font-size:12px;line-height:14px;color:#111">1:1</div>
<div class="a" style="left:0;top:927px;width:1280px;height:35px;background:#fff"></div>
<div class="a" style="left:0;top:927px;width:15.5px;height:35px;background:linear-gradient(90deg,#a8a8a8,#9a9a9a)"></div>
<div class="a" style="left:2px;top:929.5px;width:11px;height:4px;background:repeating-linear-gradient(90deg,#222 0 1px,transparent 1px 2px);-webkit-mask:repeating-linear-gradient(#000 0 1px,transparent 1px 2px)"></div>
<div class="a" style="left:15.5px;top:927px;width:1264.5px;height:17.5px;background:#c9c9c9;border-bottom:1px solid #a2a2a2"></div>
<div class="a" style="left:17px;top:928px;font-family:'Liberation Mono',monospace;font-size:11.7px;line-height:15px;color:#1a1a1a;white-space:pre">Press ESC or ENTER to exit, or right-click to display shortcut menu.</div>
<div class="a" style="left:0;top:961.5px;width:1280px;height:1.2px;background:#111"></div>
<div class="a" style="left:0;top:962.5px;width:1280px;height:19.5px;background:linear-gradient(#a6a6a6,#8a8a8a 60%,#7e7e7e)"></div>
<div class="a" style="left:12.5px;top:965.5px;font-size:11.8px;line-height:15px;color:#111;white-space:nowrap;letter-spacing:-0.45px">168.3102, 95.7032, 0.0000</div>
<div class="a" style="left:178px;top:963px;width:22px;height:19px;background:linear-gradient(#cfcfcf,#b6b6b6);border-left:1px solid #6e6e6e"></div>
<div class="a" style="left:200px;top:963px;width:22px;height:19px;background:linear-gradient(#cfcfcf,#b6b6b6);border-left:1px solid #6e6e6e"></div>
<div class="a" style="left:222px;top:963px;width:22px;height:19px;background:linear-gradient(#cfcfcf,#b6b6b6);border-left:1px solid #6e6e6e"></div>
<div class="a" style="left:244px;top:963px;width:22px;height:19px;background:linear-gradient(#cfcfcf,#b6b6b6);border-left:1px solid #6e6e6e"></div>
<div class="a" style="left:266px;top:963px;width:22px;height:19px;background:linear-gradient(#d4ecf4,#9cd0e4 50%,#80c0da);border-left:1px solid #6e6e6e"></div>
<div class="a" style="left:288px;top:963px;width:22px;height:19px;background:linear-gradient(#d4ecf4,#9cd0e4 50%,#80c0da);border-left:1px solid #6e6e6e"></div>
<div class="a" style="left:310px;top:963px;width:22px;height:19px;background:linear-gradient(#cfcfcf,#b6b6b6);border-left:1px solid #6e6e6e"></div>
<div class="a" style="left:332px;top:963px;width:22px;height:19px;background:linear-gradient(#d4ecf4,#9cd0e4 50%,#80c0da);border-left:1px solid #6e6e6e"></div>
<div class="a" style="left:354px;top:963px;width:22px;height:19px;background:linear-gradient(#d4ecf4,#9cd0e4 50%,#80c0da);border-left:1px solid #6e6e6e"></div>
<div class="a" style="left:376px;top:963px;width:22px;height:19px;background:linear-gradient(#cfcfcf,#b6b6b6);border-left:1px solid #6e6e6e"></div>
<div class="a" style="left:398px;top:963px;width:22px;height:19px;background:linear-gradient(#cfcfcf,#b6b6b6);border-left:1px solid #6e6e6e"></div>
<div class="a" style="left:420px;top:963px;width:22px;height:19px;background:linear-gradient(#d4ecf4,#9cd0e4 50%,#80c0da);border-left:1px solid #6e6e6e"></div>
<div class="a" style="left:442px;top:963px;width:22px;height:19px;background:linear-gradient(#cfcfcf,#b6b6b6);border-left:1px solid #6e6e6e"></div>
<div class="a" style="left:464px;top:963px;width:22px;height:19px;background:linear-gradient(#cfcfcf,#b6b6b6);border-left:1px solid #6e6e6e"></div>
<div class="a" style="left:486px;top:963px;width:1px;height:19px;background:#6e6e6e"></div>
<svg class="a" style="left:178px;top:963px" width="310" height="19" viewBox="178 963 310 19">
<g stroke="#222" fill="none" stroke-width="1.2">
<path d="M181 972 h13 M187.5 966 v13"/><rect x="185" y="969.5" width="5" height="5"/>
<path d="M206 968 h8 M206 971 h8 M206 974 h8 M207 977 h8 M215 968 v9" stroke-dasharray="1 1.2"/>
<rect x="224" y="965.5" width="16.5" height="15" fill="#333" stroke="none"/><rect x="225.0" y="966.3" width="2.2" height="2" fill="#fff" stroke="none"/><rect x="225.0" y="969.3" width="2.2" height="2" fill="#fff" stroke="none"/><rect x="225.0" y="972.3" width="2.2" height="2" fill="#fff" stroke="none"/><rect x="225.0" y="975.3" width="2.2" height="2" fill="#fff" stroke="none"/><rect x="225.0" y="978.3" width="2.2" height="2" fill="#fff" stroke="none"/><rect x="228.2" y="966.3" width="2.2" height="2" fill="#fff" stroke="none"/><rect x="228.2" y="969.3" width="2.2" height="2" fill="#fff" stroke="none"/><rect x="228.2" y="972.3" width="2.2" height="2" fill="#fff" stroke="none"/><rect x="228.2" y="975.3" width="2.2" height="2" fill="#fff" stroke="none"/><rect x="228.2" y="978.3" width="2.2" height="2" fill="#fff" stroke="none"/><rect x="231.4" y="966.3" width="2.2" height="2" fill="#fff" stroke="none"/><rect x="231.4" y="969.3" width="2.2" height="2" fill="#fff" stroke="none"/><rect x="231.4" y="972.3" width="2.2" height="2" fill="#fff" stroke="none"/><rect x="231.4" y="975.3" width="2.2" height="2" fill="#fff" stroke="none"/><rect x="231.4" y="978.3" width="2.2" height="2" fill="#fff" stroke="none"/><rect x="234.6" y="966.3" width="2.2" height="2" fill="#fff" stroke="none"/><rect x="234.6" y="969.3" width="2.2" height="2" fill="#fff" stroke="none"/><rect x="234.6" y="972.3" width="2.2" height="2" fill="#fff" stroke="none"/><rect x="234.6" y="975.3" width="2.2" height="2" fill="#fff" stroke="none"/><rect x="234.6" y="978.3" width="2.2" height="2" fill="#fff" stroke="none"/><rect x="237.8" y="966.3" width="2.2" height="2" fill="#fff" stroke="none"/><rect x="237.8" y="969.3" width="2.2" height="2" fill="#fff" stroke="none"/><rect x="237.8" y="972.3" width="2.2" height="2" fill="#fff" stroke="none"/><rect x="237.8" y="975.3" width="2.2" height="2" fill="#fff" stroke="none"/><rect x="237.8" y="978.3" width="2.2" height="2" fill="#fff" stroke="none"/>
<path d="M247 966 v13 h15 M247 972 h6 v7" stroke-width="1"/>
<circle cx="275" cy="974" r="4.5" stroke="#2a5a78"/><path d="M273 974 l8 -7 M273 974 h9" stroke="#111"/>
<rect x="292.5" y="968.5" width="13" height="11" fill="#f4f4f4" stroke="#333"/>
<path d="M314.5 970.5 l3 -3 h11 v10 l-3 3 h-11z" fill="#eee" stroke="#333"/>
<path d="M337 977 l11 -8 M337 977 h12" stroke="#111"/>
<path d="M357 966 v13 h15 M357 979 l12 -10" stroke="#222"/>
<path d="M380 971 h7 M383.5 968 v6" stroke="#111" stroke-width="1.6"/><rect x="386" y="972.5" width="6" height="3.5" stroke="#111"/>
<path d="M401 972 h14 M408 966 v12" stroke="#111" stroke-width="2"/>
<rect x="424" y="966.5" width="14" height="12" fill="#6a9ad4" stroke="#2a4a88"/><rect x="424.5" y="967.0" width="1" height="1" fill="#fff" stroke="none"/><rect x="424.5" y="971.0" width="1" height="1" fill="#fff" stroke="none"/><rect x="424.5" y="975.0" width="1" height="1" fill="#fff" stroke="none"/><rect x="426.5" y="969.0" width="1" height="1" fill="#fff" stroke="none"/><rect x="426.5" y="973.0" width="1" height="1" fill="#fff" stroke="none"/><rect x="426.5" y="977.0" width="1" height="1" fill="#fff" stroke="none"/><rect x="428.5" y="967.0" width="1" height="1" fill="#fff" stroke="none"/><rect x="428.5" y="971.0" width="1" height="1" fill="#fff" stroke="none"/><rect x="428.5" y="975.0" width="1" height="1" fill="#fff" stroke="none"/><rect x="430.5" y="969.0" width="1" height="1" fill="#fff" stroke="none"/><rect x="430.5" y="973.0" width="1" height="1" fill="#fff" stroke="none"/><rect x="430.5" y="977.0" width="1" height="1" fill="#fff" stroke="none"/><rect x="432.5" y="967.0" width="1" height="1" fill="#fff" stroke="none"/><rect x="432.5" y="971.0" width="1" height="1" fill="#fff" stroke="none"/><rect x="432.5" y="975.0" width="1" height="1" fill="#fff" stroke="none"/><rect x="434.5" y="969.0" width="1" height="1" fill="#fff" stroke="none"/><rect x="434.5" y="973.0" width="1" height="1" fill="#fff" stroke="none"/><rect x="434.5" y="977.0" width="1" height="1" fill="#fff" stroke="none"/><rect x="436.5" y="967.0" width="1" height="1" fill="#fff" stroke="none"/><rect x="436.5" y="971.0" width="1" height="1" fill="#fff" stroke="none"/><rect x="436.5" y="975.0" width="1" height="1" fill="#fff" stroke="none"/>
<rect x="447" y="967" width="10" height="11" fill="#222" stroke="none"/><rect x="448.5" y="968.5" width="7" height="2" fill="#fff" stroke="none"/><rect x="448.5" y="972.0" width="1.5" height="1.4" fill="#fff" stroke="none"/><rect x="448.5" y="974.3" width="1.5" height="1.4" fill="#fff" stroke="none"/><rect x="451.1" y="972.0" width="1.5" height="1.4" fill="#fff" stroke="none"/><rect x="451.1" y="974.3" width="1.5" height="1.4" fill="#fff" stroke="none"/><rect x="453.7" y="972.0" width="1.5" height="1.4" fill="#fff" stroke="none"/><rect x="453.7" y="974.3" width="1.5" height="1.4" fill="#fff" stroke="none"/>
<path d="M468 967 v6 M465 970 h6" stroke="#111"/><rect x="471.5" y="970.5" width="9" height="7" fill="#9ed080" stroke="#2a5a1a"/>
</g>
<circle cx="292" cy="967.5" r="2.2" fill="none" stroke="#e06020" stroke-width="1.2"/>
<circle cx="314" cy="979.5" r="2.2" fill="none" stroke="#e06020" stroke-width="1.2"/>
<path d="M373 966 l-3 4 h3 l-2 4 l4 -5 h-3z" fill="#f0a020"/>
</svg>
<div class="a" style="left:967.5px;top:963px;width:44px;height:19px;background:linear-gradient(#c8c8c8,#b0b0b0);border-left:1px solid #6e6e6e"></div>
<div class="a" style="left:970.5px;top:966px;font-size:11.5px;line-height:14px;color:#111;letter-spacing:-0.2px">MODEL</div>
<div class="a" style="left:1011.5px;top:963px;width:22px;height:19px;background:linear-gradient(#cde8f2,#8ec8de);border-left:1px solid #6e6e6e"></div>
<div class="a" style="left:1033px;top:963px;width:22px;height:19px;background:linear-gradient(#c8c8c8,#b0b0b0);border-left:1px solid #6e6e6e"></div>
<div class="a" style="left:1055px;top:963px;width:22px;height:19px;background:linear-gradient(#c8c8c8,#b0b0b0);border-left:1px solid #6e6e6e"></div>
<div class="a" style="left:1077px;top:963px;width:22px;height:19px;background:linear-gradient(#c8c8c8,#b0b0b0);border-left:1px solid #6e6e6e"></div>
<div class="a" style="left:1117px;top:963px;width:22px;height:19px;background:linear-gradient(#c8c8c8,#b0b0b0);border-left:1px solid #6e6e6e"></div>
<div class="a" style="left:1139px;top:963px;width:22px;height:19px;background:linear-gradient(#c8c8c8,#b0b0b0);border-left:1px solid #6e6e6e"></div>
<div class="a" style="left:1161px;top:963px;width:22px;height:19px;background:linear-gradient(#c8c8c8,#b0b0b0);border-left:1px solid #6e6e6e"></div>
<div class="a" style="left:1183px;top:963px;width:62px;height:19px;background:linear-gradient(#b4b4b4,#9a9a9a);border-left:1px solid #6e6e6e"></div>
<div class="a" style="left:1186.5px;top:966px;font-size:11.5px;line-height:14px;color:#111;letter-spacing:-0.3px">Elevation:</div>
<div class="a" style="left:1245px;top:963px;width:15px;height:19px;background:linear-gradient(#c8c8c8,#b0b0b0);border-left:1px solid #6e6e6e"></div>
<div class="a" style="left:1260px;top:963px;width:20px;height:19px;background:linear-gradient(#c8c8c8,#b0b0b0);border-left:1px solid #6e6e6e"></div>
<svg class="a" style="left:1011px;top:963px" width="269" height="19" viewBox="1011 963 269 19">
<rect x="1015" y="966" width="14" height="13" fill="#223" /><path d="M1019 977 v-7 h8 M1022 977 v-4 h5" stroke="#ddd" fill="none"/>
<rect x="1037.5" y="966.5" width="13" height="12" fill="#eee" stroke="#222"/><path d="M1039 977 l10 -9 M1042 968 v10 M1039 972 h10" stroke="#222"/>
<rect x="1059.5" y="966.5" width="13" height="12" fill="#ddd" stroke="#222"/><path d="M1062 976 v-8 l8 8z" fill="#fff" stroke="#222"/>
<rect x="1080.5" y="966.5" width="7" height="7" fill="#eee" stroke="#222"/><rect x="1089.5" y="966.5" width="7" height="7" fill="#eee" stroke="#222"/><path d="M1080 977 h17" stroke="#222" stroke-width="1.5"/>
<circle cx="1128" cy="972.5" r="5.5" fill="#eee" stroke="#222" stroke-width="1.5" stroke-dasharray="2 1"/><circle cx="1128" cy="972.5" r="2" fill="none" stroke="#222"/>
<rect x="1143.5" y="972.5" width="9" height="7" fill="#eee" stroke="#222"/><path d="M1150 972 v-3 q0 -3 3 -3 q3 0 3 3 v2" fill="none" stroke="#222" stroke-width="1.3"/>
<rect x="1164.5" y="968.5" width="12" height="7" fill="#ccc" stroke="#333"/><circle cx="1175" cy="976" r="3" fill="#f8c030"/>
<path d="M1249 971 h7 l-3.5 4z" fill="#111"/>
<rect x="1263.5" y="966.5" width="14" height="13" fill="#fff" stroke="#222"/><rect x="1264" y="967" width="13" height="2" fill="#888"/>
</svg>
</body></html>
